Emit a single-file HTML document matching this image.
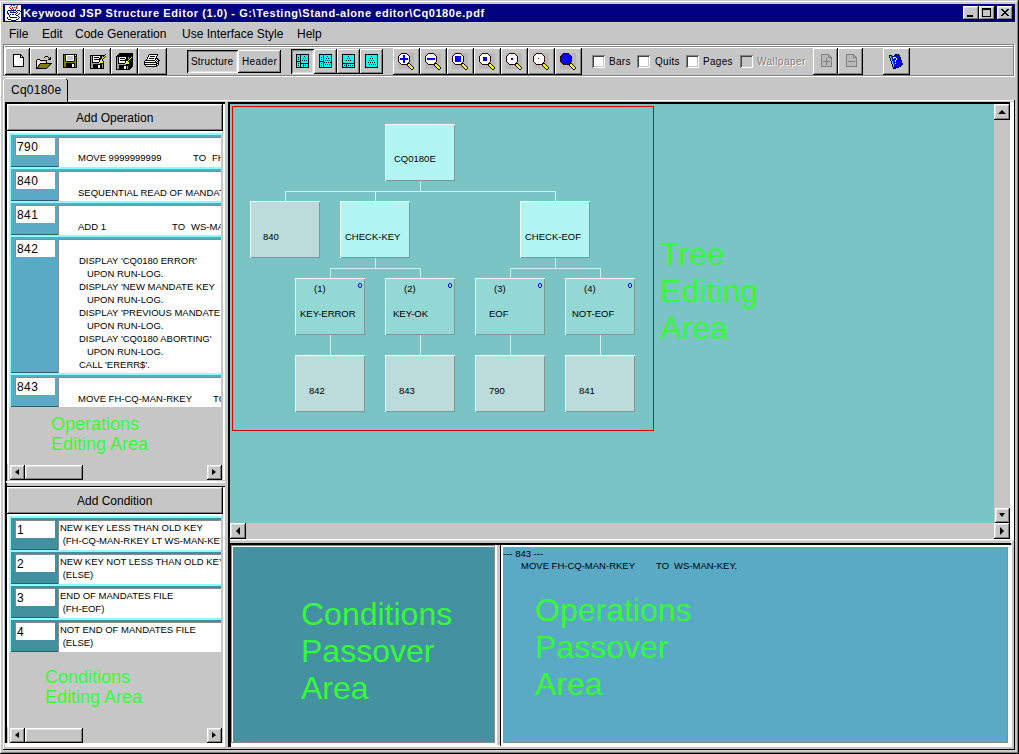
<!DOCTYPE html>
<html><head><meta charset="utf-8"><style>
html,body{margin:0;padding:0;}
body{width:1019px;height:754px;position:relative;overflow:hidden;background:#c6c6c6;font-family:"Liberation Sans",sans-serif;color:#000;}
.a{position:absolute;box-sizing:border-box;}
.t{position:absolute;white-space:pre;line-height:1;}
.raised{background:#c6c6c6;box-shadow:inset -1px -1px #000,inset 1px 1px #fff,inset -2px -2px #808080,inset 2px 2px #dfdfdf;}
.tb{background:#c6c6c6;box-shadow:inset -1px -1px #000,inset 1px 1px #fff,inset -2px -2px #808080;}
.pressed{background:#c6c6c6;box-shadow:inset 1px 1px #000,inset -1px -1px #fff,inset 2px 2px #808080,inset -2px -2px #dfdfdf;}
.sunken{box-shadow:inset 1px 1px #808080,inset -1px -1px #fff,inset 2px 2px #404040,inset -2px -2px #c6c6c6;}
.g{color:#36fa36;}
.m9{font-size:9.5px;}
.clip{overflow:hidden;}
.row{left:0;width:212px;background:#5aaac6;border-top:2px solid #8cffff;border-left:2px solid #8cffff;}
.crow{left:0;width:212px;background:#4190a0;border-top:2px solid #8cffff;border-left:2px solid #8cffff;}
.lbl{left:2px;width:47px;border-bottom:1px solid #2a5f6c;}
.nf{left:6px;width:40px;height:18px;background:#fff;border-top:1px solid #8a8a8a;border-left:1px solid #8a8a8a;}
.df{left:49px;width:170px;background:#fff;border-top:1px solid #8a8a8a;border-left:1px solid #8a8a8a;}
.num{font-size:12px;left:8px;letter-spacing:0.4px;}
</style></head><body>
<div class="a" style="left:0px;top:1px;width:1019px;height:1px;background:#fff;"></div>
<div class="a" style="left:0px;top:1px;width:1px;height:752px;background:#fff;"></div>
<div class="a" style="left:1018px;top:0px;width:1px;height:754px;background:#000;"></div>
<div class="a" style="left:0px;top:753px;width:1019px;height:1px;background:#000;"></div>
<div class="a" style="left:1017px;top:1px;width:1px;height:752px;background:#808080;"></div>
<div class="a" style="left:1px;top:752px;width:1017px;height:1px;background:#808080;"></div>
<div class="a" style="left:2px;top:3px;width:1014px;height:1px;background:#d4d0c8;"></div>
<div class="a" style="left:2px;top:3px;width:1px;height:20px;background:#d4d0c8;"></div>
<div class="a" style="left:2px;top:22px;width:1014px;height:1px;background:#d4d0c8;"></div>
<div class="a" style="left:1015px;top:3px;width:1px;height:20px;background:#d4d0c8;"></div>
<div class="a" style="left:3px;top:750px;width:1014px;height:1px;background:#d4d0c8;"></div>
<div class="a" style="left:3px;top:4px;width:1012px;height:18px;background:#000080;"></div>
<svg class="a" style="left:5px;top:5px;" width="16" height="16" shape-rendering="crispEdges"><rect x="0" y="0" width="6" height="1" fill="#fff"/><rect x="6" y="0" width="1" height="1" fill="#f00"/><rect x="7" y="0" width="1" height="1" fill="#fff"/><rect x="8" y="0" width="2" height="1" fill="#f00"/><rect x="10" y="0" width="2" height="1" fill="#fff"/><rect x="12" y="0" width="1" height="1" fill="#f00"/><rect x="13" y="0" width="3" height="1" fill="#fff"/><rect x="0" y="1" width="5" height="1" fill="#fff"/><rect x="5" y="1" width="1" height="1" fill="#f00"/><rect x="6" y="1" width="5" height="1" fill="#fff"/><rect x="11" y="1" width="1" height="1" fill="#f00"/><rect x="12" y="1" width="4" height="1" fill="#fff"/><rect x="0" y="2" width="4" height="1" fill="#fff"/><rect x="4" y="2" width="1" height="1" fill="#f00"/><rect x="5" y="2" width="2" height="1" fill="#fff"/><rect x="7" y="2" width="1" height="1" fill="#f00"/><rect x="8" y="2" width="1" height="1" fill="#fff"/><rect x="9" y="2" width="1" height="1" fill="#f00"/><rect x="10" y="2" width="1" height="1" fill="#fff"/><rect x="11" y="2" width="1" height="1" fill="#f00"/><rect x="12" y="2" width="4" height="1" fill="#fff"/><rect x="0" y="3" width="5" height="1" fill="#fff"/><rect x="5" y="3" width="1" height="1" fill="#f00"/><rect x="6" y="3" width="1" height="1" fill="#fff"/><rect x="7" y="3" width="1" height="1" fill="#f00"/><rect x="8" y="3" width="3" height="1" fill="#fff"/><rect x="11" y="3" width="1" height="1" fill="#f00"/><rect x="12" y="3" width="4" height="1" fill="#fff"/><rect x="0" y="4" width="6" height="1" fill="#fff"/><rect x="6" y="4" width="1" height="1" fill="#f00"/><rect x="7" y="4" width="1" height="1" fill="#fff"/><rect x="8" y="4" width="1" height="1" fill="#f00"/><rect x="9" y="4" width="1" height="1" fill="#fff"/><rect x="10" y="4" width="1" height="1" fill="#f00"/><rect x="11" y="4" width="5" height="1" fill="#fff"/><rect x="0" y="5" width="3" height="1" fill="#fff"/><rect x="3" y="5" width="8" height="1" fill="#000080"/><rect x="11" y="5" width="1" height="1" fill="#fff"/><rect x="12" y="5" width="3" height="1" fill="#000080"/><rect x="15" y="5" width="1" height="1" fill="#fff"/><rect x="0" y="6" width="2" height="1" fill="#fff"/><rect x="2" y="6" width="1" height="1" fill="#000080"/><rect x="3" y="6" width="2" height="1" fill="#fff"/><rect x="5" y="6" width="1" height="1" fill="#f00"/><rect x="6" y="6" width="2" height="1" fill="#fff"/><rect x="8" y="6" width="1" height="1" fill="#f00"/><rect x="9" y="6" width="2" height="1" fill="#fff"/><rect x="11" y="6" width="1" height="1" fill="#000080"/><rect x="12" y="6" width="3" height="1" fill="#fff"/><rect x="15" y="6" width="1" height="1" fill="#000080"/><rect x="0" y="7" width="2" height="1" fill="#fff"/><rect x="2" y="7" width="1" height="1" fill="#000080"/><rect x="3" y="7" width="2" height="1" fill="#fff"/><rect x="5" y="7" width="6" height="1" fill="#000080"/><rect x="11" y="7" width="1" height="1" fill="#fff"/><rect x="12" y="7" width="1" height="1" fill="#000080"/><rect x="13" y="7" width="3" height="1" fill="#fff"/><rect x="0" y="8" width="2" height="1" fill="#fff"/><rect x="2" y="8" width="2" height="1" fill="#000080"/><rect x="4" y="8" width="7" height="1" fill="#fff"/><rect x="11" y="8" width="1" height="1" fill="#000080"/><rect x="12" y="8" width="2" height="1" fill="#fff"/><rect x="14" y="8" width="1" height="1" fill="#000080"/><rect x="15" y="8" width="1" height="1" fill="#fff"/><rect x="0" y="9" width="3" height="1" fill="#fff"/><rect x="3" y="9" width="1" height="1" fill="#000080"/><rect x="4" y="9" width="1" height="1" fill="#fff"/><rect x="5" y="9" width="1" height="1" fill="#000080"/><rect x="6" y="9" width="1" height="1" fill="#fff"/><rect x="7" y="9" width="2" height="1" fill="#000080"/><rect x="9" y="9" width="1" height="1" fill="#fff"/><rect x="10" y="9" width="1" height="1" fill="#000080"/><rect x="11" y="9" width="2" height="1" fill="#fff"/><rect x="13" y="9" width="1" height="1" fill="#000080"/><rect x="14" y="9" width="2" height="1" fill="#fff"/><rect x="0" y="10" width="4" height="1" fill="#fff"/><rect x="4" y="10" width="1" height="1" fill="#000080"/><rect x="5" y="10" width="6" height="1" fill="#fff"/><rect x="11" y="10" width="2" height="1" fill="#000080"/><rect x="13" y="10" width="3" height="1" fill="#fff"/><rect x="0" y="11" width="4" height="1" fill="#fff"/><rect x="4" y="11" width="1" height="1" fill="#000080"/><rect x="5" y="11" width="8" height="1" fill="#fff"/><rect x="13" y="11" width="1" height="1" fill="#000080"/><rect x="14" y="11" width="2" height="1" fill="#fff"/><rect x="0" y="12" width="2" height="1" fill="#fff"/><rect x="2" y="12" width="1" height="1" fill="#000080"/><rect x="3" y="12" width="2" height="1" fill="#fff"/><rect x="5" y="12" width="7" height="1" fill="#000080"/><rect x="12" y="12" width="2" height="1" fill="#fff"/><rect x="14" y="12" width="1" height="1" fill="#000080"/><rect x="15" y="12" width="1" height="1" fill="#fff"/><rect x="0" y="13" width="2" height="1" fill="#fff"/><rect x="2" y="13" width="1" height="1" fill="#000080"/><rect x="3" y="13" width="10" height="1" fill="#fff"/><rect x="13" y="13" width="1" height="1" fill="#000080"/><rect x="14" y="13" width="2" height="1" fill="#fff"/><rect x="0" y="14" width="3" height="1" fill="#fff"/><rect x="3" y="14" width="3" height="1" fill="#000080"/><rect x="6" y="14" width="5" height="1" fill="#fff"/><rect x="11" y="14" width="2" height="1" fill="#000080"/><rect x="13" y="14" width="3" height="1" fill="#fff"/><rect x="0" y="15" width="6" height="1" fill="#fff"/><rect x="6" y="15" width="5" height="1" fill="#000080"/><rect x="11" y="15" width="5" height="1" fill="#fff"/></svg>
<div class="t" style="left:23px;top:8px;font-size:11px;font-weight:bold;color:#fff;letter-spacing:0.58px;">Keywood JSP Structure Editor (1.0) - G:\Testing\Stand-alone editor\Cq0180e.pdf</div>
<div class="a raised" style="left:963px;top:6px;width:16px;height:14px;"></div>
<div class="a raised" style="left:979px;top:6px;width:16px;height:14px;"></div>
<div class="a raised" style="left:997px;top:6px;width:16px;height:14px;"></div>
<div class="a" style="left:967px;top:15px;width:6px;height:2px;background:#000;"></div>
<svg class="a" style="left:982px;top:8px;" width="9" height="9" shape-rendering="crispEdges"><rect x="0" y="0" width="9" height="1" fill="#000"/><rect x="0" y="1" width="9" height="1" fill="#000"/><rect x="0" y="2" width="1" height="1" fill="#000"/><rect x="8" y="2" width="1" height="1" fill="#000"/><rect x="0" y="3" width="1" height="1" fill="#000"/><rect x="8" y="3" width="1" height="1" fill="#000"/><rect x="0" y="4" width="1" height="1" fill="#000"/><rect x="8" y="4" width="1" height="1" fill="#000"/><rect x="0" y="5" width="1" height="1" fill="#000"/><rect x="8" y="5" width="1" height="1" fill="#000"/><rect x="0" y="6" width="1" height="1" fill="#000"/><rect x="8" y="6" width="1" height="1" fill="#000"/><rect x="0" y="7" width="1" height="1" fill="#000"/><rect x="8" y="7" width="1" height="1" fill="#000"/><rect x="0" y="8" width="9" height="1" fill="#000"/></svg>
<svg class="a" style="left:1001px;top:9px;" width="8" height="7" shape-rendering="crispEdges"><rect x="0" y="0" width="2" height="1" fill="#000"/><rect x="6" y="0" width="2" height="1" fill="#000"/><rect x="1" y="1" width="2" height="1" fill="#000"/><rect x="5" y="1" width="2" height="1" fill="#000"/><rect x="2" y="2" width="4" height="1" fill="#000"/><rect x="3" y="3" width="2" height="1" fill="#000"/><rect x="2" y="4" width="4" height="1" fill="#000"/><rect x="1" y="5" width="2" height="1" fill="#000"/><rect x="5" y="5" width="2" height="1" fill="#000"/><rect x="0" y="6" width="2" height="1" fill="#000"/><rect x="6" y="6" width="2" height="1" fill="#000"/></svg>
<div class="t" style="left:9px;top:28px;font-size:12px;">File</div>
<div class="t" style="left:42px;top:28px;font-size:12px;">Edit</div>
<div class="t" style="left:75px;top:28px;font-size:12px;">Code Generation</div>
<div class="t" style="left:182px;top:28px;font-size:12px;">Use Interface Style</div>
<div class="t" style="left:297px;top:28px;font-size:12px;">Help</div>
<div class="a" style="left:3px;top:44px;width:1011px;height:1px;background:#808080;"></div>
<div class="a" style="left:3px;top:45px;width:1010px;height:1px;background:#fff;"></div>
<div class="a" style="left:3px;top:46px;width:1011px;height:1px;background:#808080;"></div>
<div class="a" style="left:4px;top:47px;width:1009px;height:1px;background:#fff;"></div>
<div class="a" style="left:3px;top:44px;width:1px;height:32px;background:#808080;"></div>
<div class="a" style="left:4px;top:45px;width:1px;height:32px;background:#fff;"></div>
<div class="a" style="left:1013px;top:44px;width:1px;height:32px;background:#808080;"></div>
<div class="a" style="left:1014px;top:44px;width:1px;height:33px;background:#fff;"></div>
<div class="a" style="left:3px;top:75px;width:1011px;height:1px;background:#808080;"></div>
<div class="a" style="left:3px;top:76px;width:1012px;height:1px;background:#fff;"></div>
<div class="a tb" style="left:5px;top:48px;width:25px;height:27px;"></div>
<div class="a tb" style="left:30px;top:48px;width:27px;height:27px;"></div>
<div class="a tb" style="left:57px;top:48px;width:27px;height:27px;"></div>
<div class="a tb" style="left:84px;top:48px;width:27px;height:27px;"></div>
<div class="a tb" style="left:111px;top:48px;width:27px;height:27px;"></div>
<div class="a tb" style="left:138px;top:48px;width:29px;height:27px;"></div>
<svg class="a" style="left:13px;top:54px;" width="11" height="13" shape-rendering="crispEdges"><rect x="0" y="0" width="8" height="1" fill="#000"/><rect x="0" y="1" width="1" height="1" fill="#000"/><rect x="1" y="1" width="6" height="1" fill="#fff"/><rect x="7" y="1" width="2" height="1" fill="#000"/><rect x="0" y="2" width="1" height="1" fill="#000"/><rect x="1" y="2" width="6" height="1" fill="#fff"/><rect x="7" y="2" width="1" height="1" fill="#000"/><rect x="8" y="2" width="1" height="1" fill="#fff"/><rect x="9" y="2" width="1" height="1" fill="#000"/><rect x="0" y="3" width="1" height="1" fill="#000"/><rect x="1" y="3" width="6" height="1" fill="#fff"/><rect x="7" y="3" width="4" height="1" fill="#000"/><rect x="0" y="4" width="1" height="1" fill="#000"/><rect x="1" y="4" width="9" height="1" fill="#fff"/><rect x="10" y="4" width="1" height="1" fill="#000"/><rect x="0" y="5" width="1" height="1" fill="#000"/><rect x="1" y="5" width="9" height="1" fill="#fff"/><rect x="10" y="5" width="1" height="1" fill="#000"/><rect x="0" y="6" width="1" height="1" fill="#000"/><rect x="1" y="6" width="9" height="1" fill="#fff"/><rect x="10" y="6" width="1" height="1" fill="#000"/><rect x="0" y="7" width="1" height="1" fill="#000"/><rect x="1" y="7" width="9" height="1" fill="#fff"/><rect x="10" y="7" width="1" height="1" fill="#000"/><rect x="0" y="8" width="1" height="1" fill="#000"/><rect x="1" y="8" width="9" height="1" fill="#fff"/><rect x="10" y="8" width="1" height="1" fill="#000"/><rect x="0" y="9" width="1" height="1" fill="#000"/><rect x="1" y="9" width="9" height="1" fill="#fff"/><rect x="10" y="9" width="1" height="1" fill="#000"/><rect x="0" y="10" width="1" height="1" fill="#000"/><rect x="1" y="10" width="9" height="1" fill="#fff"/><rect x="10" y="10" width="1" height="1" fill="#000"/><rect x="0" y="11" width="1" height="1" fill="#000"/><rect x="1" y="11" width="9" height="1" fill="#fff"/><rect x="10" y="11" width="1" height="1" fill="#000"/><rect x="0" y="12" width="11" height="1" fill="#000"/></svg>
<svg class="a" style="left:36px;top:56px;" width="16" height="13" shape-rendering="crispEdges"><rect x="9" y="0" width="3" height="1" fill="#000"/><rect x="8" y="1" width="1" height="1" fill="#000"/><rect x="12" y="1" width="1" height="1" fill="#000"/><rect x="14" y="1" width="1" height="1" fill="#000"/><rect x="13" y="2" width="2" height="1" fill="#000"/><rect x="1" y="3" width="3" height="1" fill="#000"/><rect x="12" y="3" width="3" height="1" fill="#000"/><rect x="0" y="4" width="1" height="1" fill="#000"/><rect x="1" y="4" width="1" height="1" fill="#ff0"/><rect x="2" y="4" width="1" height="1" fill="#fff"/><rect x="3" y="4" width="1" height="1" fill="#ff0"/><rect x="4" y="4" width="7" height="1" fill="#000"/><rect x="0" y="5" width="1" height="1" fill="#000"/><rect x="1" y="5" width="1" height="1" fill="#fff"/><rect x="2" y="5" width="1" height="1" fill="#ff0"/><rect x="3" y="5" width="1" height="1" fill="#fff"/><rect x="4" y="5" width="1" height="1" fill="#ff0"/><rect x="5" y="5" width="1" height="1" fill="#fff"/><rect x="6" y="5" width="1" height="1" fill="#ff0"/><rect x="7" y="5" width="1" height="1" fill="#fff"/><rect x="8" y="5" width="1" height="1" fill="#ff0"/><rect x="9" y="5" width="1" height="1" fill="#fff"/><rect x="10" y="5" width="1" height="1" fill="#000"/><rect x="0" y="6" width="1" height="1" fill="#000"/><rect x="1" y="6" width="1" height="1" fill="#ff0"/><rect x="2" y="6" width="1" height="1" fill="#fff"/><rect x="3" y="6" width="1" height="1" fill="#ff0"/><rect x="4" y="6" width="1" height="1" fill="#fff"/><rect x="5" y="6" width="1" height="1" fill="#ff0"/><rect x="6" y="6" width="1" height="1" fill="#fff"/><rect x="7" y="6" width="1" height="1" fill="#ff0"/><rect x="8" y="6" width="1" height="1" fill="#fff"/><rect x="9" y="6" width="1" height="1" fill="#ff0"/><rect x="10" y="6" width="1" height="1" fill="#000"/><rect x="0" y="7" width="1" height="1" fill="#000"/><rect x="1" y="7" width="1" height="1" fill="#fff"/><rect x="2" y="7" width="1" height="1" fill="#ff0"/><rect x="3" y="7" width="1" height="1" fill="#fff"/><rect x="4" y="7" width="12" height="1" fill="#000"/><rect x="0" y="8" width="1" height="1" fill="#000"/><rect x="1" y="8" width="1" height="1" fill="#ff0"/><rect x="2" y="8" width="1" height="1" fill="#fff"/><rect x="3" y="8" width="1" height="1" fill="#000"/><rect x="4" y="8" width="10" height="1" fill="#808000"/><rect x="14" y="8" width="1" height="1" fill="#000"/><rect x="0" y="9" width="1" height="1" fill="#000"/><rect x="1" y="9" width="1" height="1" fill="#fff"/><rect x="2" y="9" width="1" height="1" fill="#000"/><rect x="3" y="9" width="10" height="1" fill="#808000"/><rect x="13" y="9" width="1" height="1" fill="#000"/><rect x="0" y="10" width="1" height="1" fill="#000"/><rect x="1" y="10" width="1" height="1" fill="#ff0"/><rect x="2" y="10" width="1" height="1" fill="#000"/><rect x="3" y="10" width="9" height="1" fill="#808000"/><rect x="12" y="10" width="1" height="1" fill="#000"/><rect x="0" y="11" width="2" height="1" fill="#000"/><rect x="2" y="11" width="9" height="1" fill="#808000"/><rect x="11" y="11" width="1" height="1" fill="#000"/><rect x="0" y="12" width="11" height="1" fill="#000"/></svg>
<svg class="a" style="left:63px;top:54px;" width="14" height="14" shape-rendering="crispEdges"><rect x="0" y="0" width="14" height="1" fill="#000"/><rect x="0" y="1" width="1" height="1" fill="#000"/><rect x="1" y="1" width="1" height="1" fill="#808000"/><rect x="2" y="1" width="1" height="1" fill="#000"/><rect x="3" y="1" width="8" height="1" fill="#fff"/><rect x="11" y="1" width="1" height="1" fill="#000"/><rect x="12" y="1" width="1" height="1" fill="#fff"/><rect x="13" y="1" width="1" height="1" fill="#000"/><rect x="0" y="2" width="1" height="1" fill="#000"/><rect x="1" y="2" width="1" height="1" fill="#808000"/><rect x="2" y="2" width="1" height="1" fill="#000"/><rect x="3" y="2" width="1" height="1" fill="#fff"/><rect x="4" y="2" width="6" height="1" fill="#c6c6c6"/><rect x="10" y="2" width="1" height="1" fill="#fff"/><rect x="11" y="2" width="3" height="1" fill="#000"/><rect x="0" y="3" width="1" height="1" fill="#000"/><rect x="1" y="3" width="1" height="1" fill="#808000"/><rect x="2" y="3" width="1" height="1" fill="#000"/><rect x="3" y="3" width="1" height="1" fill="#fff"/><rect x="4" y="3" width="6" height="1" fill="#c6c6c6"/><rect x="10" y="3" width="1" height="1" fill="#fff"/><rect x="11" y="3" width="1" height="1" fill="#000"/><rect x="12" y="3" width="1" height="1" fill="#808000"/><rect x="13" y="3" width="1" height="1" fill="#000"/><rect x="0" y="4" width="1" height="1" fill="#000"/><rect x="1" y="4" width="1" height="1" fill="#808000"/><rect x="2" y="4" width="1" height="1" fill="#000"/><rect x="3" y="4" width="1" height="1" fill="#fff"/><rect x="4" y="4" width="6" height="1" fill="#c6c6c6"/><rect x="10" y="4" width="1" height="1" fill="#fff"/><rect x="11" y="4" width="1" height="1" fill="#000"/><rect x="12" y="4" width="1" height="1" fill="#808000"/><rect x="13" y="4" width="1" height="1" fill="#000"/><rect x="0" y="5" width="1" height="1" fill="#000"/><rect x="1" y="5" width="1" height="1" fill="#808000"/><rect x="2" y="5" width="1" height="1" fill="#000"/><rect x="3" y="5" width="1" height="1" fill="#fff"/><rect x="4" y="5" width="6" height="1" fill="#c6c6c6"/><rect x="10" y="5" width="1" height="1" fill="#fff"/><rect x="11" y="5" width="1" height="1" fill="#000"/><rect x="12" y="5" width="1" height="1" fill="#808000"/><rect x="13" y="5" width="1" height="1" fill="#000"/><rect x="0" y="6" width="1" height="1" fill="#000"/><rect x="1" y="6" width="1" height="1" fill="#808000"/><rect x="2" y="6" width="1" height="1" fill="#000"/><rect x="3" y="6" width="8" height="1" fill="#fff"/><rect x="11" y="6" width="1" height="1" fill="#000"/><rect x="12" y="6" width="1" height="1" fill="#808000"/><rect x="13" y="6" width="1" height="1" fill="#000"/><rect x="0" y="7" width="1" height="1" fill="#000"/><rect x="1" y="7" width="2" height="1" fill="#808000"/><rect x="3" y="7" width="8" height="1" fill="#000"/><rect x="11" y="7" width="2" height="1" fill="#808000"/><rect x="13" y="7" width="1" height="1" fill="#000"/><rect x="0" y="8" width="1" height="1" fill="#000"/><rect x="1" y="8" width="12" height="1" fill="#808000"/><rect x="13" y="8" width="1" height="1" fill="#000"/><rect x="0" y="9" width="1" height="1" fill="#000"/><rect x="1" y="9" width="2" height="1" fill="#808000"/><rect x="3" y="9" width="9" height="1" fill="#000"/><rect x="12" y="9" width="1" height="1" fill="#808000"/><rect x="13" y="9" width="1" height="1" fill="#000"/><rect x="0" y="10" width="1" height="1" fill="#000"/><rect x="1" y="10" width="2" height="1" fill="#808000"/><rect x="3" y="10" width="6" height="1" fill="#000"/><rect x="9" y="10" width="2" height="1" fill="#fff"/><rect x="11" y="10" width="1" height="1" fill="#000"/><rect x="12" y="10" width="1" height="1" fill="#808000"/><rect x="13" y="10" width="1" height="1" fill="#000"/><rect x="0" y="11" width="1" height="1" fill="#000"/><rect x="1" y="11" width="2" height="1" fill="#808000"/><rect x="3" y="11" width="6" height="1" fill="#000"/><rect x="9" y="11" width="2" height="1" fill="#fff"/><rect x="11" y="11" width="1" height="1" fill="#000"/><rect x="12" y="11" width="1" height="1" fill="#808000"/><rect x="13" y="11" width="1" height="1" fill="#000"/><rect x="0" y="12" width="1" height="1" fill="#000"/><rect x="1" y="12" width="2" height="1" fill="#808000"/><rect x="3" y="12" width="6" height="1" fill="#000"/><rect x="9" y="12" width="2" height="1" fill="#fff"/><rect x="11" y="12" width="1" height="1" fill="#000"/><rect x="12" y="12" width="1" height="1" fill="#808000"/><rect x="13" y="12" width="1" height="1" fill="#000"/><rect x="0" y="13" width="14" height="1" fill="#000"/></svg>
<svg class="a" style="left:90px;top:54px;" width="16" height="15" shape-rendering="crispEdges"><rect x="15" y="0" width="1" height="1" fill="#000"/><rect x="0" y="1" width="15" height="1" fill="#000"/><rect x="15" y="1" width="1" height="1" fill="#ff0"/><rect x="0" y="2" width="1" height="1" fill="#000"/><rect x="1" y="2" width="1" height="1" fill="#a0a0a0"/><rect x="2" y="2" width="1" height="1" fill="#000"/><rect x="3" y="2" width="7" height="1" fill="#fff"/><rect x="10" y="2" width="2" height="1" fill="#000"/><rect x="12" y="2" width="1" height="1" fill="#a0a0a0"/><rect x="13" y="2" width="1" height="1" fill="#000"/><rect x="14" y="2" width="1" height="1" fill="#ff0"/><rect x="15" y="2" width="1" height="1" fill="#000"/><rect x="0" y="3" width="1" height="1" fill="#000"/><rect x="1" y="3" width="1" height="1" fill="#a0a0a0"/><rect x="2" y="3" width="1" height="1" fill="#000"/><rect x="3" y="3" width="1" height="1" fill="#fff"/><rect x="4" y="3" width="5" height="1" fill="#000"/><rect x="9" y="3" width="1" height="1" fill="#fff"/><rect x="10" y="3" width="2" height="1" fill="#000"/><rect x="12" y="3" width="1" height="1" fill="#a0a0a0"/><rect x="13" y="3" width="1" height="1" fill="#ff0"/><rect x="14" y="3" width="1" height="1" fill="#000"/><rect x="0" y="4" width="1" height="1" fill="#000"/><rect x="1" y="4" width="1" height="1" fill="#a0a0a0"/><rect x="2" y="4" width="1" height="1" fill="#000"/><rect x="3" y="4" width="6" height="1" fill="#fff"/><rect x="9" y="4" width="3" height="1" fill="#000"/><rect x="12" y="4" width="1" height="1" fill="#ff0"/><rect x="13" y="4" width="1" height="1" fill="#000"/><rect x="0" y="5" width="1" height="1" fill="#000"/><rect x="1" y="5" width="1" height="1" fill="#a0a0a0"/><rect x="2" y="5" width="1" height="1" fill="#000"/><rect x="3" y="5" width="1" height="1" fill="#fff"/><rect x="4" y="5" width="7" height="1" fill="#000"/><rect x="11" y="5" width="1" height="1" fill="#ff0"/><rect x="12" y="5" width="1" height="1" fill="#000"/><rect x="0" y="6" width="1" height="1" fill="#000"/><rect x="1" y="6" width="1" height="1" fill="#a0a0a0"/><rect x="2" y="6" width="1" height="1" fill="#000"/><rect x="3" y="6" width="6" height="1" fill="#fff"/><rect x="9" y="6" width="1" height="1" fill="#000"/><rect x="10" y="6" width="1" height="1" fill="#fff"/><rect x="11" y="6" width="1" height="1" fill="#ff0"/><rect x="12" y="6" width="1" height="1" fill="#000"/><rect x="0" y="7" width="1" height="1" fill="#000"/><rect x="1" y="7" width="1" height="1" fill="#a0a0a0"/><rect x="2" y="7" width="1" height="1" fill="#000"/><rect x="3" y="7" width="6" height="1" fill="#fff"/><rect x="9" y="7" width="1" height="1" fill="#000"/><rect x="10" y="7" width="3" height="1" fill="#ff0"/><rect x="13" y="7" width="1" height="1" fill="#000"/><rect x="0" y="8" width="1" height="1" fill="#000"/><rect x="1" y="8" width="1" height="1" fill="#a0a0a0"/><rect x="2" y="8" width="7" height="1" fill="#000"/><rect x="9" y="8" width="4" height="1" fill="#ff0"/><rect x="13" y="8" width="1" height="1" fill="#000"/><rect x="0" y="9" width="1" height="1" fill="#000"/><rect x="1" y="9" width="9" height="1" fill="#a0a0a0"/><rect x="10" y="9" width="4" height="1" fill="#000"/><rect x="0" y="10" width="1" height="1" fill="#000"/><rect x="1" y="10" width="2" height="1" fill="#a0a0a0"/><rect x="3" y="10" width="9" height="1" fill="#000"/><rect x="12" y="10" width="1" height="1" fill="#a0a0a0"/><rect x="13" y="10" width="1" height="1" fill="#000"/><rect x="0" y="11" width="1" height="1" fill="#000"/><rect x="1" y="11" width="2" height="1" fill="#a0a0a0"/><rect x="3" y="11" width="5" height="1" fill="#000"/><rect x="8" y="11" width="2" height="1" fill="#fff"/><rect x="10" y="11" width="2" height="1" fill="#000"/><rect x="12" y="11" width="1" height="1" fill="#a0a0a0"/><rect x="13" y="11" width="1" height="1" fill="#000"/><rect x="0" y="12" width="1" height="1" fill="#000"/><rect x="1" y="12" width="2" height="1" fill="#a0a0a0"/><rect x="3" y="12" width="5" height="1" fill="#000"/><rect x="8" y="12" width="2" height="1" fill="#fff"/><rect x="10" y="12" width="2" height="1" fill="#000"/><rect x="12" y="12" width="1" height="1" fill="#a0a0a0"/><rect x="13" y="12" width="1" height="1" fill="#000"/><rect x="0" y="13" width="1" height="1" fill="#000"/><rect x="1" y="13" width="2" height="1" fill="#a0a0a0"/><rect x="3" y="13" width="5" height="1" fill="#000"/><rect x="8" y="13" width="2" height="1" fill="#fff"/><rect x="10" y="13" width="2" height="1" fill="#000"/><rect x="12" y="13" width="1" height="1" fill="#a0a0a0"/><rect x="13" y="13" width="1" height="1" fill="#000"/><rect x="0" y="14" width="14" height="1" fill="#000"/></svg>
<svg class="a" style="left:116px;top:53px;" width="17" height="17" shape-rendering="crispEdges"><rect x="3" y="0" width="14" height="1" fill="#000"/><rect x="2" y="1" width="15" height="1" fill="#000"/><rect x="1" y="2" width="16" height="1" fill="#000"/><rect x="0" y="3" width="17" height="1" fill="#000"/><rect x="0" y="4" width="1" height="1" fill="#000"/><rect x="1" y="4" width="1" height="1" fill="#a0a0a0"/><rect x="2" y="4" width="1" height="1" fill="#000"/><rect x="3" y="4" width="7" height="1" fill="#fff"/><rect x="10" y="4" width="2" height="1" fill="#000"/><rect x="12" y="4" width="1" height="1" fill="#a0a0a0"/><rect x="13" y="4" width="2" height="1" fill="#000"/><rect x="15" y="4" width="1" height="1" fill="#ff0"/><rect x="16" y="4" width="1" height="1" fill="#000"/><rect x="0" y="5" width="1" height="1" fill="#000"/><rect x="1" y="5" width="1" height="1" fill="#a0a0a0"/><rect x="2" y="5" width="1" height="1" fill="#000"/><rect x="3" y="5" width="1" height="1" fill="#fff"/><rect x="4" y="5" width="5" height="1" fill="#000"/><rect x="9" y="5" width="1" height="1" fill="#fff"/><rect x="10" y="5" width="2" height="1" fill="#000"/><rect x="12" y="5" width="1" height="1" fill="#a0a0a0"/><rect x="13" y="5" width="1" height="1" fill="#000"/><rect x="14" y="5" width="1" height="1" fill="#ff0"/><rect x="15" y="5" width="2" height="1" fill="#000"/><rect x="0" y="6" width="1" height="1" fill="#000"/><rect x="1" y="6" width="1" height="1" fill="#a0a0a0"/><rect x="2" y="6" width="1" height="1" fill="#000"/><rect x="3" y="6" width="6" height="1" fill="#fff"/><rect x="9" y="6" width="4" height="1" fill="#000"/><rect x="13" y="6" width="1" height="1" fill="#ff0"/><rect x="14" y="6" width="3" height="1" fill="#000"/><rect x="0" y="7" width="1" height="1" fill="#000"/><rect x="1" y="7" width="1" height="1" fill="#a0a0a0"/><rect x="2" y="7" width="1" height="1" fill="#000"/><rect x="3" y="7" width="1" height="1" fill="#fff"/><rect x="4" y="7" width="8" height="1" fill="#000"/><rect x="12" y="7" width="1" height="1" fill="#ff0"/><rect x="13" y="7" width="4" height="1" fill="#000"/><rect x="0" y="8" width="1" height="1" fill="#000"/><rect x="1" y="8" width="1" height="1" fill="#a0a0a0"/><rect x="2" y="8" width="1" height="1" fill="#000"/><rect x="3" y="8" width="6" height="1" fill="#fff"/><rect x="9" y="8" width="1" height="1" fill="#000"/><rect x="10" y="8" width="1" height="1" fill="#fff"/><rect x="11" y="8" width="1" height="1" fill="#ff0"/><rect x="12" y="8" width="5" height="1" fill="#000"/><rect x="0" y="9" width="1" height="1" fill="#000"/><rect x="1" y="9" width="1" height="1" fill="#a0a0a0"/><rect x="2" y="9" width="1" height="1" fill="#000"/><rect x="3" y="9" width="6" height="1" fill="#fff"/><rect x="9" y="9" width="1" height="1" fill="#000"/><rect x="10" y="9" width="3" height="1" fill="#ff0"/><rect x="13" y="9" width="4" height="1" fill="#000"/><rect x="0" y="10" width="1" height="1" fill="#000"/><rect x="1" y="10" width="1" height="1" fill="#a0a0a0"/><rect x="2" y="10" width="7" height="1" fill="#000"/><rect x="9" y="10" width="4" height="1" fill="#ff0"/><rect x="13" y="10" width="4" height="1" fill="#000"/><rect x="0" y="11" width="1" height="1" fill="#000"/><rect x="1" y="11" width="9" height="1" fill="#a0a0a0"/><rect x="10" y="11" width="7" height="1" fill="#000"/><rect x="0" y="12" width="1" height="1" fill="#000"/><rect x="1" y="12" width="2" height="1" fill="#a0a0a0"/><rect x="3" y="12" width="14" height="1" fill="#000"/><rect x="0" y="13" width="1" height="1" fill="#000"/><rect x="1" y="13" width="2" height="1" fill="#a0a0a0"/><rect x="3" y="13" width="5" height="1" fill="#000"/><rect x="8" y="13" width="2" height="1" fill="#fff"/><rect x="10" y="13" width="1" height="1" fill="#000"/><rect x="11" y="13" width="1" height="1" fill="#a0a0a0"/><rect x="12" y="13" width="5" height="1" fill="#000"/><rect x="0" y="14" width="1" height="1" fill="#000"/><rect x="1" y="14" width="2" height="1" fill="#a0a0a0"/><rect x="3" y="14" width="5" height="1" fill="#000"/><rect x="8" y="14" width="2" height="1" fill="#fff"/><rect x="10" y="14" width="1" height="1" fill="#000"/><rect x="11" y="14" width="1" height="1" fill="#a0a0a0"/><rect x="12" y="14" width="4" height="1" fill="#000"/><rect x="0" y="15" width="1" height="1" fill="#000"/><rect x="1" y="15" width="2" height="1" fill="#a0a0a0"/><rect x="3" y="15" width="5" height="1" fill="#000"/><rect x="8" y="15" width="2" height="1" fill="#fff"/><rect x="10" y="15" width="1" height="1" fill="#000"/><rect x="11" y="15" width="1" height="1" fill="#a0a0a0"/><rect x="12" y="15" width="3" height="1" fill="#000"/><rect x="0" y="16" width="14" height="1" fill="#000"/></svg>
<svg class="a" style="left:144px;top:54px;" width="16" height="13" shape-rendering="crispEdges"><rect x="5" y="0" width="9" height="1" fill="#000"/><rect x="4" y="1" width="1" height="1" fill="#000"/><rect x="5" y="1" width="8" height="1" fill="#fff"/><rect x="13" y="1" width="1" height="1" fill="#000"/><rect x="4" y="2" width="1" height="1" fill="#000"/><rect x="5" y="2" width="1" height="1" fill="#fff"/><rect x="6" y="2" width="5" height="1" fill="#000"/><rect x="11" y="2" width="1" height="1" fill="#fff"/><rect x="12" y="2" width="1" height="1" fill="#000"/><rect x="3" y="3" width="1" height="1" fill="#000"/><rect x="4" y="3" width="8" height="1" fill="#fff"/><rect x="12" y="3" width="1" height="1" fill="#000"/><rect x="3" y="4" width="1" height="1" fill="#000"/><rect x="4" y="4" width="1" height="1" fill="#fff"/><rect x="5" y="4" width="5" height="1" fill="#000"/><rect x="10" y="4" width="1" height="1" fill="#fff"/><rect x="11" y="4" width="3" height="1" fill="#000"/><rect x="2" y="5" width="1" height="1" fill="#000"/><rect x="3" y="5" width="8" height="1" fill="#fff"/><rect x="11" y="5" width="1" height="1" fill="#000"/><rect x="12" y="5" width="1" height="1" fill="#fff"/><rect x="13" y="5" width="2" height="1" fill="#000"/><rect x="1" y="6" width="10" height="1" fill="#000"/><rect x="11" y="6" width="1" height="1" fill="#fff"/><rect x="12" y="6" width="1" height="1" fill="#000"/><rect x="13" y="6" width="1" height="1" fill="#fff"/><rect x="14" y="6" width="2" height="1" fill="#000"/><rect x="0" y="7" width="1" height="1" fill="#000"/><rect x="1" y="7" width="10" height="1" fill="#fff"/><rect x="11" y="7" width="1" height="1" fill="#000"/><rect x="12" y="7" width="1" height="1" fill="#fff"/><rect x="13" y="7" width="2" height="1" fill="#000"/><rect x="0" y="8" width="13" height="1" fill="#000"/><rect x="13" y="8" width="1" height="1" fill="#fff"/><rect x="14" y="8" width="1" height="1" fill="#000"/><rect x="0" y="9" width="1" height="1" fill="#000"/><rect x="1" y="9" width="6" height="1" fill="#fff"/><rect x="7" y="9" width="3" height="1" fill="#ff0"/><rect x="10" y="9" width="2" height="1" fill="#fff"/><rect x="12" y="9" width="3" height="1" fill="#000"/><rect x="0" y="10" width="13" height="1" fill="#000"/><rect x="13" y="10" width="1" height="1" fill="#fff"/><rect x="14" y="10" width="1" height="1" fill="#000"/><rect x="1" y="11" width="1" height="1" fill="#000"/><rect x="2" y="11" width="10" height="1" fill="#fff"/><rect x="12" y="11" width="2" height="1" fill="#000"/><rect x="2" y="12" width="11" height="1" fill="#000"/></svg>
<div class="a pressed" style="left:187px;top:50px;width:51px;height:23px;"></div>
<div class="t" style="left:191px;top:57px;font-size:10px;letter-spacing:0.2px;">Structure</div>
<div class="a tb" style="left:238px;top:50px;width:43px;height:23px;"></div>
<div class="t" style="left:242px;top:57px;font-size:10px;letter-spacing:0.4px;">Header</div>
<div class="a pressed" style="left:291px;top:49px;width:23px;height:25px;"></div>
<div class="a tb" style="left:314px;top:49px;width:23px;height:25px;"></div>
<div class="a tb" style="left:337px;top:49px;width:23px;height:25px;"></div>
<div class="a tb" style="left:360px;top:49px;width:23px;height:25px;"></div>
<svg class="a" style="left:296px;top:54px;" width="13" height="14" shape-rendering="crispEdges"><rect x="0" y="0" width="13" height="1" fill="#000"/><rect x="0" y="1" width="1" height="1" fill="#000"/><rect x="1" y="1" width="3" height="1" fill="#0ff"/><rect x="4" y="1" width="1" height="1" fill="#000"/><rect x="5" y="1" width="7" height="1" fill="#0ff"/><rect x="12" y="1" width="1" height="1" fill="#000"/><rect x="0" y="2" width="1" height="1" fill="#000"/><rect x="1" y="2" width="3" height="1" fill="#0ff"/><rect x="4" y="2" width="1" height="1" fill="#000"/><rect x="5" y="2" width="3" height="1" fill="#0ff"/><rect x="8" y="2" width="1" height="1" fill="#000"/><rect x="9" y="2" width="3" height="1" fill="#0ff"/><rect x="12" y="2" width="1" height="1" fill="#000"/><rect x="0" y="3" width="1" height="1" fill="#000"/><rect x="1" y="3" width="1" height="1" fill="#0ff"/><rect x="2" y="3" width="1" height="1" fill="#000"/><rect x="3" y="3" width="1" height="1" fill="#0ff"/><rect x="4" y="3" width="1" height="1" fill="#000"/><rect x="5" y="3" width="7" height="1" fill="#0ff"/><rect x="12" y="3" width="1" height="1" fill="#000"/><rect x="0" y="4" width="1" height="1" fill="#000"/><rect x="1" y="4" width="3" height="1" fill="#0ff"/><rect x="4" y="4" width="1" height="1" fill="#000"/><rect x="5" y="4" width="2" height="1" fill="#0ff"/><rect x="7" y="4" width="1" height="1" fill="#000"/><rect x="8" y="4" width="1" height="1" fill="#0ff"/><rect x="9" y="4" width="1" height="1" fill="#000"/><rect x="10" y="4" width="2" height="1" fill="#0ff"/><rect x="12" y="4" width="1" height="1" fill="#000"/><rect x="0" y="5" width="1" height="1" fill="#000"/><rect x="1" y="5" width="1" height="1" fill="#0ff"/><rect x="2" y="5" width="1" height="1" fill="#000"/><rect x="3" y="5" width="1" height="1" fill="#0ff"/><rect x="4" y="5" width="1" height="1" fill="#000"/><rect x="5" y="5" width="7" height="1" fill="#0ff"/><rect x="12" y="5" width="1" height="1" fill="#000"/><rect x="0" y="6" width="1" height="1" fill="#000"/><rect x="1" y="6" width="3" height="1" fill="#0ff"/><rect x="4" y="6" width="1" height="1" fill="#000"/><rect x="5" y="6" width="1" height="1" fill="#0ff"/><rect x="6" y="6" width="1" height="1" fill="#000"/><rect x="7" y="6" width="1" height="1" fill="#0ff"/><rect x="8" y="6" width="1" height="1" fill="#000"/><rect x="9" y="6" width="1" height="1" fill="#0ff"/><rect x="10" y="6" width="1" height="1" fill="#000"/><rect x="11" y="6" width="1" height="1" fill="#0ff"/><rect x="12" y="6" width="1" height="1" fill="#000"/><rect x="0" y="7" width="5" height="1" fill="#000"/><rect x="5" y="7" width="7" height="1" fill="#0ff"/><rect x="12" y="7" width="1" height="1" fill="#000"/><rect x="0" y="8" width="1" height="1" fill="#000"/><rect x="1" y="8" width="3" height="1" fill="#0ff"/><rect x="4" y="8" width="1" height="1" fill="#000"/><rect x="5" y="8" width="7" height="1" fill="#0ff"/><rect x="12" y="8" width="1" height="1" fill="#000"/><rect x="0" y="9" width="1" height="1" fill="#000"/><rect x="1" y="9" width="1" height="1" fill="#0ff"/><rect x="2" y="9" width="1" height="1" fill="#000"/><rect x="3" y="9" width="1" height="1" fill="#0ff"/><rect x="4" y="9" width="9" height="1" fill="#000"/><rect x="0" y="10" width="1" height="1" fill="#000"/><rect x="1" y="10" width="3" height="1" fill="#0ff"/><rect x="4" y="10" width="1" height="1" fill="#000"/><rect x="5" y="10" width="2" height="1" fill="#0ff"/><rect x="7" y="10" width="1" height="1" fill="#000"/><rect x="8" y="10" width="4" height="1" fill="#0ff"/><rect x="12" y="10" width="1" height="1" fill="#000"/><rect x="0" y="11" width="1" height="1" fill="#000"/><rect x="1" y="11" width="1" height="1" fill="#0ff"/><rect x="2" y="11" width="1" height="1" fill="#000"/><rect x="3" y="11" width="1" height="1" fill="#0ff"/><rect x="4" y="11" width="1" height="1" fill="#000"/><rect x="5" y="11" width="2" height="1" fill="#0ff"/><rect x="7" y="11" width="1" height="1" fill="#000"/><rect x="8" y="11" width="1" height="1" fill="#0ff"/><rect x="9" y="11" width="1" height="1" fill="#000"/><rect x="10" y="11" width="2" height="1" fill="#0ff"/><rect x="12" y="11" width="1" height="1" fill="#000"/><rect x="0" y="12" width="1" height="1" fill="#000"/><rect x="1" y="12" width="3" height="1" fill="#0ff"/><rect x="4" y="12" width="1" height="1" fill="#000"/><rect x="5" y="12" width="2" height="1" fill="#0ff"/><rect x="7" y="12" width="1" height="1" fill="#000"/><rect x="8" y="12" width="4" height="1" fill="#0ff"/><rect x="12" y="12" width="1" height="1" fill="#000"/><rect x="0" y="13" width="13" height="1" fill="#000"/></svg>
<svg class="a" style="left:319px;top:54px;" width="13" height="14" shape-rendering="crispEdges"><rect x="0" y="0" width="13" height="1" fill="#000"/><rect x="0" y="1" width="1" height="1" fill="#000"/><rect x="1" y="1" width="3" height="1" fill="#0ff"/><rect x="4" y="1" width="1" height="1" fill="#000"/><rect x="5" y="1" width="7" height="1" fill="#0ff"/><rect x="12" y="1" width="1" height="1" fill="#000"/><rect x="0" y="2" width="1" height="1" fill="#000"/><rect x="1" y="2" width="3" height="1" fill="#0ff"/><rect x="4" y="2" width="1" height="1" fill="#000"/><rect x="5" y="2" width="3" height="1" fill="#0ff"/><rect x="8" y="2" width="1" height="1" fill="#000"/><rect x="9" y="2" width="3" height="1" fill="#0ff"/><rect x="12" y="2" width="1" height="1" fill="#000"/><rect x="0" y="3" width="1" height="1" fill="#000"/><rect x="1" y="3" width="1" height="1" fill="#0ff"/><rect x="2" y="3" width="1" height="1" fill="#000"/><rect x="3" y="3" width="1" height="1" fill="#0ff"/><rect x="4" y="3" width="1" height="1" fill="#000"/><rect x="5" y="3" width="7" height="1" fill="#0ff"/><rect x="12" y="3" width="1" height="1" fill="#000"/><rect x="0" y="4" width="1" height="1" fill="#000"/><rect x="1" y="4" width="3" height="1" fill="#0ff"/><rect x="4" y="4" width="1" height="1" fill="#000"/><rect x="5" y="4" width="2" height="1" fill="#0ff"/><rect x="7" y="4" width="1" height="1" fill="#000"/><rect x="8" y="4" width="1" height="1" fill="#0ff"/><rect x="9" y="4" width="1" height="1" fill="#000"/><rect x="10" y="4" width="2" height="1" fill="#0ff"/><rect x="12" y="4" width="1" height="1" fill="#000"/><rect x="0" y="5" width="1" height="1" fill="#000"/><rect x="1" y="5" width="1" height="1" fill="#0ff"/><rect x="2" y="5" width="1" height="1" fill="#000"/><rect x="3" y="5" width="1" height="1" fill="#0ff"/><rect x="4" y="5" width="1" height="1" fill="#000"/><rect x="5" y="5" width="7" height="1" fill="#0ff"/><rect x="12" y="5" width="1" height="1" fill="#000"/><rect x="0" y="6" width="1" height="1" fill="#000"/><rect x="1" y="6" width="3" height="1" fill="#0ff"/><rect x="4" y="6" width="1" height="1" fill="#000"/><rect x="5" y="6" width="1" height="1" fill="#0ff"/><rect x="6" y="6" width="1" height="1" fill="#000"/><rect x="7" y="6" width="1" height="1" fill="#0ff"/><rect x="8" y="6" width="1" height="1" fill="#000"/><rect x="9" y="6" width="1" height="1" fill="#0ff"/><rect x="10" y="6" width="1" height="1" fill="#000"/><rect x="11" y="6" width="1" height="1" fill="#0ff"/><rect x="12" y="6" width="1" height="1" fill="#000"/><rect x="0" y="7" width="5" height="1" fill="#000"/><rect x="5" y="7" width="7" height="1" fill="#0ff"/><rect x="12" y="7" width="1" height="1" fill="#000"/><rect x="0" y="8" width="1" height="1" fill="#000"/><rect x="1" y="8" width="3" height="1" fill="#0ff"/><rect x="4" y="8" width="2" height="1" fill="#000"/><rect x="6" y="8" width="1" height="1" fill="#0ff"/><rect x="7" y="8" width="1" height="1" fill="#000"/><rect x="8" y="8" width="1" height="1" fill="#0ff"/><rect x="9" y="8" width="1" height="1" fill="#000"/><rect x="10" y="8" width="1" height="1" fill="#0ff"/><rect x="11" y="8" width="2" height="1" fill="#000"/><rect x="0" y="9" width="1" height="1" fill="#000"/><rect x="1" y="9" width="1" height="1" fill="#0ff"/><rect x="2" y="9" width="1" height="1" fill="#000"/><rect x="3" y="9" width="1" height="1" fill="#0ff"/><rect x="4" y="9" width="1" height="1" fill="#000"/><rect x="5" y="9" width="7" height="1" fill="#0ff"/><rect x="12" y="9" width="1" height="1" fill="#000"/><rect x="0" y="10" width="1" height="1" fill="#000"/><rect x="1" y="10" width="3" height="1" fill="#0ff"/><rect x="4" y="10" width="1" height="1" fill="#000"/><rect x="5" y="10" width="1" height="1" fill="#0ff"/><rect x="6" y="10" width="1" height="1" fill="#000"/><rect x="7" y="10" width="1" height="1" fill="#0ff"/><rect x="8" y="10" width="1" height="1" fill="#000"/><rect x="9" y="10" width="1" height="1" fill="#0ff"/><rect x="10" y="10" width="1" height="1" fill="#000"/><rect x="11" y="10" width="1" height="1" fill="#0ff"/><rect x="12" y="10" width="1" height="1" fill="#000"/><rect x="0" y="11" width="1" height="1" fill="#000"/><rect x="1" y="11" width="1" height="1" fill="#0ff"/><rect x="2" y="11" width="1" height="1" fill="#000"/><rect x="3" y="11" width="1" height="1" fill="#0ff"/><rect x="4" y="11" width="1" height="1" fill="#000"/><rect x="5" y="11" width="7" height="1" fill="#0ff"/><rect x="12" y="11" width="1" height="1" fill="#000"/><rect x="0" y="12" width="1" height="1" fill="#000"/><rect x="1" y="12" width="3" height="1" fill="#0ff"/><rect x="4" y="12" width="1" height="1" fill="#000"/><rect x="5" y="12" width="7" height="1" fill="#0ff"/><rect x="12" y="12" width="1" height="1" fill="#000"/><rect x="0" y="13" width="13" height="1" fill="#000"/></svg>
<svg class="a" style="left:342px;top:54px;" width="13" height="14" shape-rendering="crispEdges"><rect x="0" y="0" width="13" height="1" fill="#000"/><rect x="0" y="1" width="1" height="1" fill="#000"/><rect x="1" y="1" width="11" height="1" fill="#0ff"/><rect x="12" y="1" width="1" height="1" fill="#000"/><rect x="0" y="2" width="1" height="1" fill="#000"/><rect x="1" y="2" width="5" height="1" fill="#0ff"/><rect x="6" y="2" width="1" height="1" fill="#000"/><rect x="7" y="2" width="5" height="1" fill="#0ff"/><rect x="12" y="2" width="1" height="1" fill="#000"/><rect x="0" y="3" width="1" height="1" fill="#000"/><rect x="1" y="3" width="11" height="1" fill="#0ff"/><rect x="12" y="3" width="1" height="1" fill="#000"/><rect x="0" y="4" width="1" height="1" fill="#000"/><rect x="1" y="4" width="4" height="1" fill="#0ff"/><rect x="5" y="4" width="1" height="1" fill="#000"/><rect x="6" y="4" width="1" height="1" fill="#0ff"/><rect x="7" y="4" width="1" height="1" fill="#000"/><rect x="8" y="4" width="4" height="1" fill="#0ff"/><rect x="12" y="4" width="1" height="1" fill="#000"/><rect x="0" y="5" width="1" height="1" fill="#000"/><rect x="1" y="5" width="11" height="1" fill="#0ff"/><rect x="12" y="5" width="1" height="1" fill="#000"/><rect x="0" y="6" width="1" height="1" fill="#000"/><rect x="1" y="6" width="3" height="1" fill="#0ff"/><rect x="4" y="6" width="1" height="1" fill="#000"/><rect x="5" y="6" width="1" height="1" fill="#0ff"/><rect x="6" y="6" width="1" height="1" fill="#000"/><rect x="7" y="6" width="1" height="1" fill="#0ff"/><rect x="8" y="6" width="1" height="1" fill="#000"/><rect x="9" y="6" width="3" height="1" fill="#0ff"/><rect x="12" y="6" width="1" height="1" fill="#000"/><rect x="0" y="7" width="1" height="1" fill="#000"/><rect x="1" y="7" width="11" height="1" fill="#0ff"/><rect x="12" y="7" width="1" height="1" fill="#000"/><rect x="0" y="8" width="1" height="1" fill="#000"/><rect x="1" y="8" width="11" height="1" fill="#0ff"/><rect x="12" y="8" width="1" height="1" fill="#000"/><rect x="0" y="9" width="13" height="1" fill="#000"/><rect x="0" y="10" width="1" height="1" fill="#000"/><rect x="1" y="10" width="3" height="1" fill="#0ff"/><rect x="4" y="10" width="1" height="1" fill="#000"/><rect x="5" y="10" width="7" height="1" fill="#0ff"/><rect x="12" y="10" width="1" height="1" fill="#000"/><rect x="0" y="11" width="1" height="1" fill="#000"/><rect x="1" y="11" width="1" height="1" fill="#0ff"/><rect x="2" y="11" width="1" height="1" fill="#000"/><rect x="3" y="11" width="1" height="1" fill="#0ff"/><rect x="4" y="11" width="1" height="1" fill="#000"/><rect x="5" y="11" width="1" height="1" fill="#0ff"/><rect x="6" y="11" width="1" height="1" fill="#000"/><rect x="7" y="11" width="1" height="1" fill="#0ff"/><rect x="8" y="11" width="1" height="1" fill="#000"/><rect x="9" y="11" width="1" height="1" fill="#0ff"/><rect x="10" y="11" width="1" height="1" fill="#000"/><rect x="11" y="11" width="1" height="1" fill="#0ff"/><rect x="12" y="11" width="1" height="1" fill="#000"/><rect x="0" y="12" width="1" height="1" fill="#000"/><rect x="1" y="12" width="3" height="1" fill="#0ff"/><rect x="4" y="12" width="1" height="1" fill="#000"/><rect x="5" y="12" width="7" height="1" fill="#0ff"/><rect x="12" y="12" width="1" height="1" fill="#000"/><rect x="0" y="13" width="13" height="1" fill="#000"/></svg>
<svg class="a" style="left:365px;top:54px;" width="13" height="14" shape-rendering="crispEdges"><rect x="0" y="0" width="13" height="1" fill="#000"/><rect x="0" y="1" width="1" height="1" fill="#000"/><rect x="1" y="1" width="11" height="1" fill="#0ff"/><rect x="12" y="1" width="1" height="1" fill="#000"/><rect x="0" y="2" width="1" height="1" fill="#000"/><rect x="1" y="2" width="5" height="1" fill="#0ff"/><rect x="6" y="2" width="1" height="1" fill="#000"/><rect x="7" y="2" width="5" height="1" fill="#0ff"/><rect x="12" y="2" width="1" height="1" fill="#000"/><rect x="0" y="3" width="1" height="1" fill="#000"/><rect x="1" y="3" width="11" height="1" fill="#0ff"/><rect x="12" y="3" width="1" height="1" fill="#000"/><rect x="0" y="4" width="1" height="1" fill="#000"/><rect x="1" y="4" width="4" height="1" fill="#0ff"/><rect x="5" y="4" width="1" height="1" fill="#000"/><rect x="6" y="4" width="1" height="1" fill="#0ff"/><rect x="7" y="4" width="1" height="1" fill="#000"/><rect x="8" y="4" width="4" height="1" fill="#0ff"/><rect x="12" y="4" width="1" height="1" fill="#000"/><rect x="0" y="5" width="1" height="1" fill="#000"/><rect x="1" y="5" width="11" height="1" fill="#0ff"/><rect x="12" y="5" width="1" height="1" fill="#000"/><rect x="0" y="6" width="1" height="1" fill="#000"/><rect x="1" y="6" width="3" height="1" fill="#0ff"/><rect x="4" y="6" width="1" height="1" fill="#000"/><rect x="5" y="6" width="1" height="1" fill="#0ff"/><rect x="6" y="6" width="1" height="1" fill="#000"/><rect x="7" y="6" width="1" height="1" fill="#0ff"/><rect x="8" y="6" width="1" height="1" fill="#000"/><rect x="9" y="6" width="3" height="1" fill="#0ff"/><rect x="12" y="6" width="1" height="1" fill="#000"/><rect x="0" y="7" width="1" height="1" fill="#000"/><rect x="1" y="7" width="11" height="1" fill="#0ff"/><rect x="12" y="7" width="1" height="1" fill="#000"/><rect x="0" y="8" width="1" height="1" fill="#000"/><rect x="1" y="8" width="2" height="1" fill="#0ff"/><rect x="3" y="8" width="1" height="1" fill="#000"/><rect x="4" y="8" width="1" height="1" fill="#0ff"/><rect x="5" y="8" width="1" height="1" fill="#000"/><rect x="6" y="8" width="1" height="1" fill="#0ff"/><rect x="7" y="8" width="1" height="1" fill="#000"/><rect x="8" y="8" width="1" height="1" fill="#0ff"/><rect x="9" y="8" width="1" height="1" fill="#000"/><rect x="10" y="8" width="2" height="1" fill="#0ff"/><rect x="12" y="8" width="1" height="1" fill="#000"/><rect x="0" y="9" width="1" height="1" fill="#000"/><rect x="1" y="9" width="11" height="1" fill="#0ff"/><rect x="12" y="9" width="1" height="1" fill="#000"/><rect x="0" y="10" width="1" height="1" fill="#000"/><rect x="1" y="10" width="3" height="1" fill="#0ff"/><rect x="4" y="10" width="1" height="1" fill="#000"/><rect x="5" y="10" width="1" height="1" fill="#0ff"/><rect x="6" y="10" width="1" height="1" fill="#000"/><rect x="7" y="10" width="1" height="1" fill="#0ff"/><rect x="8" y="10" width="1" height="1" fill="#000"/><rect x="9" y="10" width="1" height="1" fill="#0ff"/><rect x="10" y="10" width="1" height="1" fill="#000"/><rect x="11" y="10" width="1" height="1" fill="#0ff"/><rect x="12" y="10" width="1" height="1" fill="#000"/><rect x="0" y="11" width="1" height="1" fill="#000"/><rect x="1" y="11" width="11" height="1" fill="#0ff"/><rect x="12" y="11" width="1" height="1" fill="#000"/><rect x="0" y="12" width="1" height="1" fill="#000"/><rect x="1" y="12" width="11" height="1" fill="#0ff"/><rect x="12" y="12" width="1" height="1" fill="#000"/><rect x="0" y="13" width="13" height="1" fill="#000"/></svg>
<div class="a tb" style="left:393px;top:48px;width:27px;height:27px;"></div>
<div class="a" style="left:398px;top:53px;width:16px;height:16px;background:#b8b8b8;"></div>
<div class="a tb" style="left:420px;top:48px;width:27px;height:27px;"></div>
<div class="a" style="left:425px;top:53px;width:16px;height:16px;background:#b8b8b8;"></div>
<div class="a tb" style="left:447px;top:48px;width:27px;height:27px;"></div>
<div class="a" style="left:452px;top:53px;width:16px;height:16px;background:#b8b8b8;"></div>
<div class="a tb" style="left:474px;top:48px;width:27px;height:27px;"></div>
<div class="a" style="left:479px;top:53px;width:16px;height:16px;background:#b8b8b8;"></div>
<div class="a tb" style="left:501px;top:48px;width:27px;height:27px;"></div>
<div class="a" style="left:506px;top:53px;width:16px;height:16px;background:#b8b8b8;"></div>
<div class="a tb" style="left:528px;top:48px;width:27px;height:27px;"></div>
<div class="a" style="left:533px;top:53px;width:16px;height:16px;background:#b8b8b8;"></div>
<div class="a tb" style="left:555px;top:48px;width:27px;height:27px;"></div>
<div class="a" style="left:560px;top:53px;width:16px;height:16px;background:#b8b8b8;"></div>
<svg class="a" style="left:398px;top:53px;" width="17" height="17" shape-rendering="crispEdges"><rect x="3" y="0" width="6" height="1" fill="#300000"/><rect x="2" y="1" width="1" height="1" fill="#300000"/><rect x="3" y="1" width="6" height="1" fill="#fff"/><rect x="9" y="1" width="1" height="1" fill="#300000"/><rect x="1" y="2" width="1" height="1" fill="#300000"/><rect x="2" y="2" width="3" height="1" fill="#fff"/><rect x="5" y="2" width="2" height="1" fill="#00f"/><rect x="7" y="2" width="3" height="1" fill="#fff"/><rect x="10" y="2" width="1" height="1" fill="#300000"/><rect x="0" y="3" width="1" height="1" fill="#300000"/><rect x="1" y="3" width="4" height="1" fill="#fff"/><rect x="5" y="3" width="2" height="1" fill="#00f"/><rect x="7" y="3" width="4" height="1" fill="#fff"/><rect x="11" y="3" width="1" height="1" fill="#300000"/><rect x="0" y="4" width="1" height="1" fill="#300000"/><rect x="1" y="4" width="4" height="1" fill="#fff"/><rect x="5" y="4" width="2" height="1" fill="#00f"/><rect x="7" y="4" width="4" height="1" fill="#fff"/><rect x="11" y="4" width="1" height="1" fill="#300000"/><rect x="0" y="5" width="1" height="1" fill="#300000"/><rect x="1" y="5" width="1" height="1" fill="#fff"/><rect x="2" y="5" width="8" height="1" fill="#00f"/><rect x="10" y="5" width="1" height="1" fill="#fff"/><rect x="11" y="5" width="1" height="1" fill="#300000"/><rect x="0" y="6" width="1" height="1" fill="#300000"/><rect x="1" y="6" width="1" height="1" fill="#fff"/><rect x="2" y="6" width="8" height="1" fill="#00f"/><rect x="10" y="6" width="1" height="1" fill="#fff"/><rect x="11" y="6" width="1" height="1" fill="#300000"/><rect x="0" y="7" width="1" height="1" fill="#300000"/><rect x="1" y="7" width="4" height="1" fill="#fff"/><rect x="5" y="7" width="2" height="1" fill="#00f"/><rect x="7" y="7" width="4" height="1" fill="#fff"/><rect x="11" y="7" width="1" height="1" fill="#300000"/><rect x="0" y="8" width="1" height="1" fill="#300000"/><rect x="1" y="8" width="4" height="1" fill="#fff"/><rect x="5" y="8" width="2" height="1" fill="#00f"/><rect x="7" y="8" width="4" height="1" fill="#fff"/><rect x="11" y="8" width="1" height="1" fill="#300000"/><rect x="1" y="9" width="1" height="1" fill="#300000"/><rect x="2" y="9" width="3" height="1" fill="#fff"/><rect x="5" y="9" width="2" height="1" fill="#00f"/><rect x="7" y="9" width="3" height="1" fill="#fff"/><rect x="10" y="9" width="1" height="1" fill="#300000"/><rect x="2" y="10" width="1" height="1" fill="#300000"/><rect x="3" y="10" width="6" height="1" fill="#fff"/><rect x="9" y="10" width="1" height="1" fill="#300000"/><rect x="10" y="10" width="2" height="1" fill="#000"/><rect x="3" y="11" width="6" height="1" fill="#300000"/><rect x="9" y="11" width="1" height="1" fill="#000"/><rect x="10" y="11" width="2" height="1" fill="#ff0"/><rect x="12" y="11" width="1" height="1" fill="#000"/><rect x="9" y="12" width="1" height="1" fill="#000"/><rect x="10" y="12" width="3" height="1" fill="#ff0"/><rect x="13" y="12" width="1" height="1" fill="#000"/><rect x="10" y="13" width="1" height="1" fill="#000"/><rect x="11" y="13" width="3" height="1" fill="#ff0"/><rect x="14" y="13" width="1" height="1" fill="#000"/><rect x="11" y="14" width="1" height="1" fill="#000"/><rect x="12" y="14" width="3" height="1" fill="#ff0"/><rect x="15" y="14" width="1" height="1" fill="#000"/><rect x="12" y="15" width="1" height="1" fill="#000"/><rect x="13" y="15" width="2" height="1" fill="#ff0"/><rect x="15" y="15" width="1" height="1" fill="#000"/><rect x="13" y="16" width="2" height="1" fill="#000"/></svg>
<svg class="a" style="left:425px;top:53px;" width="17" height="17" shape-rendering="crispEdges"><rect x="3" y="0" width="6" height="1" fill="#300000"/><rect x="2" y="1" width="1" height="1" fill="#300000"/><rect x="3" y="1" width="6" height="1" fill="#fff"/><rect x="9" y="1" width="1" height="1" fill="#300000"/><rect x="1" y="2" width="1" height="1" fill="#300000"/><rect x="2" y="2" width="8" height="1" fill="#fff"/><rect x="10" y="2" width="1" height="1" fill="#300000"/><rect x="0" y="3" width="1" height="1" fill="#300000"/><rect x="1" y="3" width="10" height="1" fill="#fff"/><rect x="11" y="3" width="1" height="1" fill="#300000"/><rect x="0" y="4" width="1" height="1" fill="#300000"/><rect x="1" y="4" width="10" height="1" fill="#fff"/><rect x="11" y="4" width="1" height="1" fill="#300000"/><rect x="0" y="5" width="1" height="1" fill="#300000"/><rect x="1" y="5" width="1" height="1" fill="#fff"/><rect x="2" y="5" width="8" height="1" fill="#00f"/><rect x="10" y="5" width="1" height="1" fill="#fff"/><rect x="11" y="5" width="1" height="1" fill="#300000"/><rect x="0" y="6" width="1" height="1" fill="#300000"/><rect x="1" y="6" width="1" height="1" fill="#fff"/><rect x="2" y="6" width="8" height="1" fill="#00f"/><rect x="10" y="6" width="1" height="1" fill="#fff"/><rect x="11" y="6" width="1" height="1" fill="#300000"/><rect x="0" y="7" width="1" height="1" fill="#300000"/><rect x="1" y="7" width="10" height="1" fill="#fff"/><rect x="11" y="7" width="1" height="1" fill="#300000"/><rect x="0" y="8" width="1" height="1" fill="#300000"/><rect x="1" y="8" width="10" height="1" fill="#fff"/><rect x="11" y="8" width="1" height="1" fill="#300000"/><rect x="1" y="9" width="1" height="1" fill="#300000"/><rect x="2" y="9" width="8" height="1" fill="#fff"/><rect x="10" y="9" width="1" height="1" fill="#300000"/><rect x="2" y="10" width="1" height="1" fill="#300000"/><rect x="3" y="10" width="6" height="1" fill="#fff"/><rect x="9" y="10" width="1" height="1" fill="#300000"/><rect x="10" y="10" width="2" height="1" fill="#000"/><rect x="3" y="11" width="6" height="1" fill="#300000"/><rect x="9" y="11" width="1" height="1" fill="#000"/><rect x="10" y="11" width="2" height="1" fill="#ff0"/><rect x="12" y="11" width="1" height="1" fill="#000"/><rect x="9" y="12" width="1" height="1" fill="#000"/><rect x="10" y="12" width="3" height="1" fill="#ff0"/><rect x="13" y="12" width="1" height="1" fill="#000"/><rect x="10" y="13" width="1" height="1" fill="#000"/><rect x="11" y="13" width="3" height="1" fill="#ff0"/><rect x="14" y="13" width="1" height="1" fill="#000"/><rect x="11" y="14" width="1" height="1" fill="#000"/><rect x="12" y="14" width="3" height="1" fill="#ff0"/><rect x="15" y="14" width="1" height="1" fill="#000"/><rect x="12" y="15" width="1" height="1" fill="#000"/><rect x="13" y="15" width="2" height="1" fill="#ff0"/><rect x="15" y="15" width="1" height="1" fill="#000"/><rect x="13" y="16" width="2" height="1" fill="#000"/></svg>
<svg class="a" style="left:452px;top:53px;" width="17" height="17" shape-rendering="crispEdges"><rect x="3" y="0" width="6" height="1" fill="#300000"/><rect x="2" y="1" width="1" height="1" fill="#300000"/><rect x="3" y="1" width="6" height="1" fill="#fff"/><rect x="9" y="1" width="1" height="1" fill="#300000"/><rect x="1" y="2" width="1" height="1" fill="#300000"/><rect x="2" y="2" width="8" height="1" fill="#fff"/><rect x="10" y="2" width="1" height="1" fill="#300000"/><rect x="0" y="3" width="1" height="1" fill="#300000"/><rect x="1" y="3" width="2" height="1" fill="#fff"/><rect x="3" y="3" width="6" height="1" fill="#00f"/><rect x="9" y="3" width="2" height="1" fill="#fff"/><rect x="11" y="3" width="1" height="1" fill="#300000"/><rect x="0" y="4" width="1" height="1" fill="#300000"/><rect x="1" y="4" width="2" height="1" fill="#fff"/><rect x="3" y="4" width="6" height="1" fill="#00f"/><rect x="9" y="4" width="2" height="1" fill="#fff"/><rect x="11" y="4" width="1" height="1" fill="#300000"/><rect x="0" y="5" width="1" height="1" fill="#300000"/><rect x="1" y="5" width="2" height="1" fill="#fff"/><rect x="3" y="5" width="6" height="1" fill="#00f"/><rect x="9" y="5" width="2" height="1" fill="#fff"/><rect x="11" y="5" width="1" height="1" fill="#300000"/><rect x="0" y="6" width="1" height="1" fill="#300000"/><rect x="1" y="6" width="2" height="1" fill="#fff"/><rect x="3" y="6" width="6" height="1" fill="#00f"/><rect x="9" y="6" width="2" height="1" fill="#fff"/><rect x="11" y="6" width="1" height="1" fill="#300000"/><rect x="0" y="7" width="1" height="1" fill="#300000"/><rect x="1" y="7" width="2" height="1" fill="#fff"/><rect x="3" y="7" width="6" height="1" fill="#00f"/><rect x="9" y="7" width="2" height="1" fill="#fff"/><rect x="11" y="7" width="1" height="1" fill="#300000"/><rect x="0" y="8" width="1" height="1" fill="#300000"/><rect x="1" y="8" width="2" height="1" fill="#fff"/><rect x="3" y="8" width="6" height="1" fill="#00f"/><rect x="9" y="8" width="2" height="1" fill="#fff"/><rect x="11" y="8" width="1" height="1" fill="#300000"/><rect x="1" y="9" width="1" height="1" fill="#300000"/><rect x="2" y="9" width="8" height="1" fill="#fff"/><rect x="10" y="9" width="1" height="1" fill="#300000"/><rect x="2" y="10" width="1" height="1" fill="#300000"/><rect x="3" y="10" width="6" height="1" fill="#fff"/><rect x="9" y="10" width="1" height="1" fill="#300000"/><rect x="10" y="10" width="2" height="1" fill="#000"/><rect x="3" y="11" width="6" height="1" fill="#300000"/><rect x="9" y="11" width="1" height="1" fill="#000"/><rect x="10" y="11" width="2" height="1" fill="#ff0"/><rect x="12" y="11" width="1" height="1" fill="#000"/><rect x="9" y="12" width="1" height="1" fill="#000"/><rect x="10" y="12" width="3" height="1" fill="#ff0"/><rect x="13" y="12" width="1" height="1" fill="#000"/><rect x="10" y="13" width="1" height="1" fill="#000"/><rect x="11" y="13" width="3" height="1" fill="#ff0"/><rect x="14" y="13" width="1" height="1" fill="#000"/><rect x="11" y="14" width="1" height="1" fill="#000"/><rect x="12" y="14" width="3" height="1" fill="#ff0"/><rect x="15" y="14" width="1" height="1" fill="#000"/><rect x="12" y="15" width="1" height="1" fill="#000"/><rect x="13" y="15" width="2" height="1" fill="#ff0"/><rect x="15" y="15" width="1" height="1" fill="#000"/><rect x="13" y="16" width="2" height="1" fill="#000"/></svg>
<svg class="a" style="left:479px;top:53px;" width="17" height="17" shape-rendering="crispEdges"><rect x="3" y="0" width="6" height="1" fill="#300000"/><rect x="2" y="1" width="1" height="1" fill="#300000"/><rect x="3" y="1" width="6" height="1" fill="#fff"/><rect x="9" y="1" width="1" height="1" fill="#300000"/><rect x="1" y="2" width="1" height="1" fill="#300000"/><rect x="2" y="2" width="8" height="1" fill="#fff"/><rect x="10" y="2" width="1" height="1" fill="#300000"/><rect x="0" y="3" width="1" height="1" fill="#300000"/><rect x="1" y="3" width="10" height="1" fill="#fff"/><rect x="11" y="3" width="1" height="1" fill="#300000"/><rect x="0" y="4" width="1" height="1" fill="#300000"/><rect x="1" y="4" width="3" height="1" fill="#fff"/><rect x="4" y="4" width="4" height="1" fill="#00f"/><rect x="8" y="4" width="3" height="1" fill="#fff"/><rect x="11" y="4" width="1" height="1" fill="#300000"/><rect x="0" y="5" width="1" height="1" fill="#300000"/><rect x="1" y="5" width="3" height="1" fill="#fff"/><rect x="4" y="5" width="4" height="1" fill="#00f"/><rect x="8" y="5" width="3" height="1" fill="#fff"/><rect x="11" y="5" width="1" height="1" fill="#300000"/><rect x="0" y="6" width="1" height="1" fill="#300000"/><rect x="1" y="6" width="3" height="1" fill="#fff"/><rect x="4" y="6" width="4" height="1" fill="#00f"/><rect x="8" y="6" width="3" height="1" fill="#fff"/><rect x="11" y="6" width="1" height="1" fill="#300000"/><rect x="0" y="7" width="1" height="1" fill="#300000"/><rect x="1" y="7" width="3" height="1" fill="#fff"/><rect x="4" y="7" width="4" height="1" fill="#00f"/><rect x="8" y="7" width="3" height="1" fill="#fff"/><rect x="11" y="7" width="1" height="1" fill="#300000"/><rect x="0" y="8" width="1" height="1" fill="#300000"/><rect x="1" y="8" width="10" height="1" fill="#fff"/><rect x="11" y="8" width="1" height="1" fill="#300000"/><rect x="1" y="9" width="1" height="1" fill="#300000"/><rect x="2" y="9" width="8" height="1" fill="#fff"/><rect x="10" y="9" width="1" height="1" fill="#300000"/><rect x="2" y="10" width="1" height="1" fill="#300000"/><rect x="3" y="10" width="6" height="1" fill="#fff"/><rect x="9" y="10" width="1" height="1" fill="#300000"/><rect x="10" y="10" width="2" height="1" fill="#000"/><rect x="3" y="11" width="6" height="1" fill="#300000"/><rect x="9" y="11" width="1" height="1" fill="#000"/><rect x="10" y="11" width="2" height="1" fill="#ff0"/><rect x="12" y="11" width="1" height="1" fill="#000"/><rect x="9" y="12" width="1" height="1" fill="#000"/><rect x="10" y="12" width="3" height="1" fill="#ff0"/><rect x="13" y="12" width="1" height="1" fill="#000"/><rect x="10" y="13" width="1" height="1" fill="#000"/><rect x="11" y="13" width="3" height="1" fill="#ff0"/><rect x="14" y="13" width="1" height="1" fill="#000"/><rect x="11" y="14" width="1" height="1" fill="#000"/><rect x="12" y="14" width="3" height="1" fill="#ff0"/><rect x="15" y="14" width="1" height="1" fill="#000"/><rect x="12" y="15" width="1" height="1" fill="#000"/><rect x="13" y="15" width="2" height="1" fill="#ff0"/><rect x="15" y="15" width="1" height="1" fill="#000"/><rect x="13" y="16" width="2" height="1" fill="#000"/></svg>
<svg class="a" style="left:506px;top:53px;" width="17" height="17" shape-rendering="crispEdges"><rect x="3" y="0" width="6" height="1" fill="#300000"/><rect x="2" y="1" width="1" height="1" fill="#300000"/><rect x="3" y="1" width="6" height="1" fill="#fff"/><rect x="9" y="1" width="1" height="1" fill="#300000"/><rect x="1" y="2" width="1" height="1" fill="#300000"/><rect x="2" y="2" width="8" height="1" fill="#fff"/><rect x="10" y="2" width="1" height="1" fill="#300000"/><rect x="0" y="3" width="1" height="1" fill="#300000"/><rect x="1" y="3" width="10" height="1" fill="#fff"/><rect x="11" y="3" width="1" height="1" fill="#300000"/><rect x="0" y="4" width="1" height="1" fill="#300000"/><rect x="1" y="4" width="10" height="1" fill="#fff"/><rect x="11" y="4" width="1" height="1" fill="#300000"/><rect x="0" y="5" width="1" height="1" fill="#300000"/><rect x="1" y="5" width="4" height="1" fill="#fff"/><rect x="5" y="5" width="2" height="1" fill="#00f"/><rect x="7" y="5" width="4" height="1" fill="#fff"/><rect x="11" y="5" width="1" height="1" fill="#300000"/><rect x="0" y="6" width="1" height="1" fill="#300000"/><rect x="1" y="6" width="4" height="1" fill="#fff"/><rect x="5" y="6" width="2" height="1" fill="#00f"/><rect x="7" y="6" width="4" height="1" fill="#fff"/><rect x="11" y="6" width="1" height="1" fill="#300000"/><rect x="0" y="7" width="1" height="1" fill="#300000"/><rect x="1" y="7" width="10" height="1" fill="#fff"/><rect x="11" y="7" width="1" height="1" fill="#300000"/><rect x="0" y="8" width="1" height="1" fill="#300000"/><rect x="1" y="8" width="10" height="1" fill="#fff"/><rect x="11" y="8" width="1" height="1" fill="#300000"/><rect x="1" y="9" width="1" height="1" fill="#300000"/><rect x="2" y="9" width="8" height="1" fill="#fff"/><rect x="10" y="9" width="1" height="1" fill="#300000"/><rect x="2" y="10" width="1" height="1" fill="#300000"/><rect x="3" y="10" width="6" height="1" fill="#fff"/><rect x="9" y="10" width="1" height="1" fill="#300000"/><rect x="10" y="10" width="2" height="1" fill="#000"/><rect x="3" y="11" width="6" height="1" fill="#300000"/><rect x="9" y="11" width="1" height="1" fill="#000"/><rect x="10" y="11" width="2" height="1" fill="#ff0"/><rect x="12" y="11" width="1" height="1" fill="#000"/><rect x="9" y="12" width="1" height="1" fill="#000"/><rect x="10" y="12" width="3" height="1" fill="#ff0"/><rect x="13" y="12" width="1" height="1" fill="#000"/><rect x="10" y="13" width="1" height="1" fill="#000"/><rect x="11" y="13" width="3" height="1" fill="#ff0"/><rect x="14" y="13" width="1" height="1" fill="#000"/><rect x="11" y="14" width="1" height="1" fill="#000"/><rect x="12" y="14" width="3" height="1" fill="#ff0"/><rect x="15" y="14" width="1" height="1" fill="#000"/><rect x="12" y="15" width="1" height="1" fill="#000"/><rect x="13" y="15" width="2" height="1" fill="#ff0"/><rect x="15" y="15" width="1" height="1" fill="#000"/><rect x="13" y="16" width="2" height="1" fill="#000"/></svg>
<svg class="a" style="left:533px;top:53px;" width="17" height="17" shape-rendering="crispEdges"><rect x="3" y="0" width="6" height="1" fill="#300000"/><rect x="2" y="1" width="1" height="1" fill="#300000"/><rect x="3" y="1" width="6" height="1" fill="#fff"/><rect x="9" y="1" width="1" height="1" fill="#300000"/><rect x="1" y="2" width="1" height="1" fill="#300000"/><rect x="2" y="2" width="8" height="1" fill="#fff"/><rect x="10" y="2" width="1" height="1" fill="#300000"/><rect x="0" y="3" width="1" height="1" fill="#300000"/><rect x="1" y="3" width="10" height="1" fill="#fff"/><rect x="11" y="3" width="1" height="1" fill="#300000"/><rect x="0" y="4" width="1" height="1" fill="#300000"/><rect x="1" y="4" width="10" height="1" fill="#fff"/><rect x="11" y="4" width="1" height="1" fill="#300000"/><rect x="0" y="5" width="1" height="1" fill="#300000"/><rect x="1" y="5" width="4" height="1" fill="#fff"/><rect x="5" y="5" width="1" height="1" fill="#00f"/><rect x="6" y="5" width="5" height="1" fill="#fff"/><rect x="11" y="5" width="1" height="1" fill="#300000"/><rect x="0" y="6" width="1" height="1" fill="#300000"/><rect x="1" y="6" width="10" height="1" fill="#fff"/><rect x="11" y="6" width="1" height="1" fill="#300000"/><rect x="0" y="7" width="1" height="1" fill="#300000"/><rect x="1" y="7" width="10" height="1" fill="#fff"/><rect x="11" y="7" width="1" height="1" fill="#300000"/><rect x="0" y="8" width="1" height="1" fill="#300000"/><rect x="1" y="8" width="10" height="1" fill="#fff"/><rect x="11" y="8" width="1" height="1" fill="#300000"/><rect x="1" y="9" width="1" height="1" fill="#300000"/><rect x="2" y="9" width="8" height="1" fill="#fff"/><rect x="10" y="9" width="1" height="1" fill="#300000"/><rect x="2" y="10" width="1" height="1" fill="#300000"/><rect x="3" y="10" width="6" height="1" fill="#fff"/><rect x="9" y="10" width="1" height="1" fill="#300000"/><rect x="10" y="10" width="2" height="1" fill="#000"/><rect x="3" y="11" width="6" height="1" fill="#300000"/><rect x="9" y="11" width="1" height="1" fill="#000"/><rect x="10" y="11" width="2" height="1" fill="#ff0"/><rect x="12" y="11" width="1" height="1" fill="#000"/><rect x="9" y="12" width="1" height="1" fill="#000"/><rect x="10" y="12" width="3" height="1" fill="#ff0"/><rect x="13" y="12" width="1" height="1" fill="#000"/><rect x="10" y="13" width="1" height="1" fill="#000"/><rect x="11" y="13" width="3" height="1" fill="#ff0"/><rect x="14" y="13" width="1" height="1" fill="#000"/><rect x="11" y="14" width="1" height="1" fill="#000"/><rect x="12" y="14" width="3" height="1" fill="#ff0"/><rect x="15" y="14" width="1" height="1" fill="#000"/><rect x="12" y="15" width="1" height="1" fill="#000"/><rect x="13" y="15" width="2" height="1" fill="#ff0"/><rect x="15" y="15" width="1" height="1" fill="#000"/><rect x="13" y="16" width="2" height="1" fill="#000"/></svg>
<svg class="a" style="left:560px;top:53px;" width="17" height="17" shape-rendering="crispEdges"><rect x="3" y="0" width="6" height="1" fill="#300000"/><rect x="2" y="1" width="1" height="1" fill="#300000"/><rect x="3" y="1" width="6" height="1" fill="#00f"/><rect x="9" y="1" width="1" height="1" fill="#300000"/><rect x="1" y="2" width="1" height="1" fill="#300000"/><rect x="2" y="2" width="8" height="1" fill="#00f"/><rect x="10" y="2" width="1" height="1" fill="#300000"/><rect x="0" y="3" width="1" height="1" fill="#300000"/><rect x="1" y="3" width="10" height="1" fill="#00f"/><rect x="11" y="3" width="1" height="1" fill="#300000"/><rect x="0" y="4" width="1" height="1" fill="#300000"/><rect x="1" y="4" width="10" height="1" fill="#00f"/><rect x="11" y="4" width="1" height="1" fill="#300000"/><rect x="0" y="5" width="1" height="1" fill="#300000"/><rect x="1" y="5" width="10" height="1" fill="#00f"/><rect x="11" y="5" width="1" height="1" fill="#300000"/><rect x="0" y="6" width="1" height="1" fill="#300000"/><rect x="1" y="6" width="10" height="1" fill="#00f"/><rect x="11" y="6" width="1" height="1" fill="#300000"/><rect x="0" y="7" width="1" height="1" fill="#300000"/><rect x="1" y="7" width="10" height="1" fill="#00f"/><rect x="11" y="7" width="1" height="1" fill="#300000"/><rect x="0" y="8" width="1" height="1" fill="#300000"/><rect x="1" y="8" width="10" height="1" fill="#00f"/><rect x="11" y="8" width="1" height="1" fill="#300000"/><rect x="1" y="9" width="1" height="1" fill="#300000"/><rect x="2" y="9" width="8" height="1" fill="#00f"/><rect x="10" y="9" width="1" height="1" fill="#300000"/><rect x="2" y="10" width="1" height="1" fill="#300000"/><rect x="3" y="10" width="6" height="1" fill="#00f"/><rect x="9" y="10" width="1" height="1" fill="#300000"/><rect x="10" y="10" width="2" height="1" fill="#000"/><rect x="3" y="11" width="6" height="1" fill="#300000"/><rect x="9" y="11" width="1" height="1" fill="#000"/><rect x="10" y="11" width="2" height="1" fill="#ff0"/><rect x="12" y="11" width="1" height="1" fill="#000"/><rect x="9" y="12" width="1" height="1" fill="#000"/><rect x="10" y="12" width="3" height="1" fill="#ff0"/><rect x="13" y="12" width="1" height="1" fill="#000"/><rect x="10" y="13" width="1" height="1" fill="#000"/><rect x="11" y="13" width="3" height="1" fill="#ff0"/><rect x="14" y="13" width="1" height="1" fill="#000"/><rect x="11" y="14" width="1" height="1" fill="#000"/><rect x="12" y="14" width="3" height="1" fill="#ff0"/><rect x="15" y="14" width="1" height="1" fill="#000"/><rect x="12" y="15" width="1" height="1" fill="#000"/><rect x="13" y="15" width="2" height="1" fill="#ff0"/><rect x="15" y="15" width="1" height="1" fill="#000"/><rect x="13" y="16" width="2" height="1" fill="#000"/></svg>
<div class="a sunken" style="left:592px;top:55px;width:13px;height:13px;background:#fff;"></div>
<div class="t" style="left:609px;top:57px;font-size:10px;letter-spacing:0.3px;">Bars</div>
<div class="a sunken" style="left:637px;top:55px;width:13px;height:13px;background:#fff;"></div>
<div class="t" style="left:655px;top:57px;font-size:10px;letter-spacing:0.3px;">Quits</div>
<div class="a sunken" style="left:686px;top:55px;width:13px;height:13px;background:#fff;"></div>
<div class="t" style="left:703px;top:57px;font-size:10px;letter-spacing:0.3px;">Pages</div>
<div class="a sunken" style="left:740px;top:55px;width:13px;height:13px;background:#c6c6c6;"></div>
<div class="t" style="left:758px;top:58px;font-size:10px;color:#fff;letter-spacing:0.45px;">Wallpaper</div>
<div class="t" style="left:757px;top:57px;font-size:10px;color:#808080;letter-spacing:0.45px;">Wallpaper</div>
<div class="a tb" style="left:813px;top:48px;width:25px;height:27px;"></div>
<div class="a tb" style="left:838px;top:48px;width:25px;height:27px;"></div>
<div class="a tb" style="left:883px;top:48px;width:27px;height:27px;"></div>
<svg class="a" style="left:821px;top:54px;" width="12" height="13" shape-rendering="crispEdges"><rect x="0" y="0" width="8" height="1" fill="#808080"/><rect x="0" y="1" width="1" height="1" fill="#808080"/><rect x="1" y="1" width="6" height="1" fill="#b8b8b8"/><rect x="7" y="1" width="2" height="1" fill="#808080"/><rect x="0" y="2" width="1" height="1" fill="#808080"/><rect x="1" y="2" width="6" height="1" fill="#b8b8b8"/><rect x="7" y="2" width="1" height="1" fill="#808080"/><rect x="8" y="2" width="1" height="1" fill="#b8b8b8"/><rect x="9" y="2" width="1" height="1" fill="#808080"/><rect x="0" y="3" width="1" height="1" fill="#808080"/><rect x="1" y="3" width="6" height="1" fill="#b8b8b8"/><rect x="7" y="3" width="4" height="1" fill="#808080"/><rect x="0" y="4" width="1" height="1" fill="#808080"/><rect x="1" y="4" width="4" height="1" fill="#b8b8b8"/><rect x="5" y="4" width="1" height="1" fill="#808080"/><rect x="6" y="4" width="4" height="1" fill="#b8b8b8"/><rect x="10" y="4" width="1" height="1" fill="#808080"/><rect x="0" y="5" width="1" height="1" fill="#808080"/><rect x="1" y="5" width="4" height="1" fill="#b8b8b8"/><rect x="5" y="5" width="1" height="1" fill="#808080"/><rect x="6" y="5" width="4" height="1" fill="#b8b8b8"/><rect x="10" y="5" width="1" height="1" fill="#808080"/><rect x="0" y="6" width="1" height="1" fill="#808080"/><rect x="1" y="6" width="4" height="1" fill="#b8b8b8"/><rect x="5" y="6" width="1" height="1" fill="#808080"/><rect x="6" y="6" width="4" height="1" fill="#b8b8b8"/><rect x="10" y="6" width="1" height="1" fill="#808080"/><rect x="0" y="7" width="1" height="1" fill="#808080"/><rect x="1" y="7" width="1" height="1" fill="#b8b8b8"/><rect x="2" y="7" width="7" height="1" fill="#808080"/><rect x="9" y="7" width="1" height="1" fill="#b8b8b8"/><rect x="10" y="7" width="1" height="1" fill="#808080"/><rect x="0" y="8" width="1" height="1" fill="#808080"/><rect x="1" y="8" width="4" height="1" fill="#b8b8b8"/><rect x="5" y="8" width="1" height="1" fill="#808080"/><rect x="6" y="8" width="4" height="1" fill="#b8b8b8"/><rect x="10" y="8" width="1" height="1" fill="#808080"/><rect x="0" y="9" width="1" height="1" fill="#808080"/><rect x="1" y="9" width="4" height="1" fill="#b8b8b8"/><rect x="5" y="9" width="1" height="1" fill="#808080"/><rect x="6" y="9" width="4" height="1" fill="#b8b8b8"/><rect x="10" y="9" width="1" height="1" fill="#808080"/><rect x="0" y="10" width="1" height="1" fill="#808080"/><rect x="1" y="10" width="4" height="1" fill="#b8b8b8"/><rect x="5" y="10" width="1" height="1" fill="#808080"/><rect x="6" y="10" width="4" height="1" fill="#b8b8b8"/><rect x="10" y="10" width="1" height="1" fill="#808080"/><rect x="0" y="11" width="1" height="1" fill="#808080"/><rect x="1" y="11" width="9" height="1" fill="#b8b8b8"/><rect x="10" y="11" width="1" height="1" fill="#808080"/><rect x="0" y="12" width="11" height="1" fill="#808080"/></svg>
<svg class="a" style="left:846px;top:54px;" width="12" height="13" shape-rendering="crispEdges"><rect x="0" y="0" width="8" height="1" fill="#808080"/><rect x="0" y="1" width="1" height="1" fill="#808080"/><rect x="1" y="1" width="6" height="1" fill="#b8b8b8"/><rect x="7" y="1" width="2" height="1" fill="#808080"/><rect x="0" y="2" width="1" height="1" fill="#808080"/><rect x="1" y="2" width="6" height="1" fill="#b8b8b8"/><rect x="7" y="2" width="1" height="1" fill="#808080"/><rect x="8" y="2" width="1" height="1" fill="#b8b8b8"/><rect x="9" y="2" width="1" height="1" fill="#808080"/><rect x="0" y="3" width="1" height="1" fill="#808080"/><rect x="1" y="3" width="6" height="1" fill="#b8b8b8"/><rect x="7" y="3" width="4" height="1" fill="#808080"/><rect x="0" y="4" width="1" height="1" fill="#808080"/><rect x="1" y="4" width="9" height="1" fill="#b8b8b8"/><rect x="10" y="4" width="1" height="1" fill="#808080"/><rect x="0" y="5" width="1" height="1" fill="#808080"/><rect x="1" y="5" width="9" height="1" fill="#b8b8b8"/><rect x="10" y="5" width="1" height="1" fill="#808080"/><rect x="0" y="6" width="1" height="1" fill="#808080"/><rect x="1" y="6" width="9" height="1" fill="#b8b8b8"/><rect x="10" y="6" width="1" height="1" fill="#808080"/><rect x="0" y="7" width="1" height="1" fill="#808080"/><rect x="1" y="7" width="1" height="1" fill="#b8b8b8"/><rect x="2" y="7" width="7" height="1" fill="#808080"/><rect x="9" y="7" width="1" height="1" fill="#b8b8b8"/><rect x="10" y="7" width="1" height="1" fill="#808080"/><rect x="0" y="8" width="1" height="1" fill="#808080"/><rect x="1" y="8" width="9" height="1" fill="#b8b8b8"/><rect x="10" y="8" width="1" height="1" fill="#808080"/><rect x="0" y="9" width="1" height="1" fill="#808080"/><rect x="1" y="9" width="9" height="1" fill="#b8b8b8"/><rect x="10" y="9" width="1" height="1" fill="#808080"/><rect x="0" y="10" width="1" height="1" fill="#808080"/><rect x="1" y="10" width="9" height="1" fill="#b8b8b8"/><rect x="10" y="10" width="1" height="1" fill="#808080"/><rect x="0" y="11" width="1" height="1" fill="#808080"/><rect x="1" y="11" width="9" height="1" fill="#b8b8b8"/><rect x="10" y="11" width="1" height="1" fill="#808080"/><rect x="0" y="12" width="11" height="1" fill="#808080"/></svg>
<svg class="a" style="left:889px;top:54px;" width="14" height="15" shape-rendering="crispEdges"><rect x="6" y="0" width="4" height="1" fill="#000"/><rect x="0" y="1" width="3" height="1" fill="#000"/><rect x="5" y="1" width="1" height="1" fill="#000"/><rect x="6" y="1" width="4" height="1" fill="#00f"/><rect x="10" y="1" width="1" height="1" fill="#000"/><rect x="0" y="2" width="1" height="1" fill="#000"/><rect x="1" y="2" width="1" height="1" fill="#0ff"/><rect x="2" y="2" width="1" height="1" fill="#00f"/><rect x="3" y="2" width="2" height="1" fill="#000"/><rect x="5" y="2" width="5" height="1" fill="#00f"/><rect x="10" y="2" width="1" height="1" fill="#000"/><rect x="0" y="3" width="1" height="1" fill="#000"/><rect x="1" y="3" width="1" height="1" fill="#0ff"/><rect x="2" y="3" width="2" height="1" fill="#00f"/><rect x="4" y="3" width="3" height="1" fill="#fff"/><rect x="7" y="3" width="4" height="1" fill="#00f"/><rect x="11" y="3" width="1" height="1" fill="#000"/><rect x="1" y="4" width="1" height="1" fill="#000"/><rect x="2" y="4" width="1" height="1" fill="#0ff"/><rect x="3" y="4" width="1" height="1" fill="#00f"/><rect x="4" y="4" width="1" height="1" fill="#fff"/><rect x="5" y="4" width="2" height="1" fill="#00f"/><rect x="7" y="4" width="1" height="1" fill="#fff"/><rect x="8" y="4" width="3" height="1" fill="#00f"/><rect x="11" y="4" width="1" height="1" fill="#000"/><rect x="1" y="5" width="1" height="1" fill="#000"/><rect x="2" y="5" width="1" height="1" fill="#0ff"/><rect x="3" y="5" width="4" height="1" fill="#00f"/><rect x="7" y="5" width="1" height="1" fill="#fff"/><rect x="8" y="5" width="3" height="1" fill="#00f"/><rect x="11" y="5" width="1" height="1" fill="#000"/><rect x="1" y="6" width="1" height="1" fill="#000"/><rect x="2" y="6" width="1" height="1" fill="#0ff"/><rect x="3" y="6" width="3" height="1" fill="#00f"/><rect x="6" y="6" width="1" height="1" fill="#fff"/><rect x="7" y="6" width="5" height="1" fill="#00f"/><rect x="12" y="6" width="1" height="1" fill="#000"/><rect x="2" y="7" width="1" height="1" fill="#000"/><rect x="3" y="7" width="1" height="1" fill="#0ff"/><rect x="4" y="7" width="2" height="1" fill="#00f"/><rect x="6" y="7" width="1" height="1" fill="#fff"/><rect x="7" y="7" width="5" height="1" fill="#00f"/><rect x="12" y="7" width="1" height="1" fill="#000"/><rect x="2" y="8" width="1" height="1" fill="#000"/><rect x="3" y="8" width="1" height="1" fill="#0ff"/><rect x="4" y="8" width="8" height="1" fill="#00f"/><rect x="12" y="8" width="1" height="1" fill="#000"/><rect x="2" y="9" width="1" height="1" fill="#000"/><rect x="3" y="9" width="1" height="1" fill="#0ff"/><rect x="4" y="9" width="2" height="1" fill="#00f"/><rect x="6" y="9" width="1" height="1" fill="#fff"/><rect x="7" y="9" width="6" height="1" fill="#00f"/><rect x="13" y="9" width="1" height="1" fill="#000"/><rect x="3" y="10" width="1" height="1" fill="#000"/><rect x="4" y="10" width="1" height="1" fill="#0ff"/><rect x="5" y="10" width="8" height="1" fill="#00f"/><rect x="13" y="10" width="1" height="1" fill="#000"/><rect x="3" y="11" width="1" height="1" fill="#000"/><rect x="4" y="11" width="1" height="1" fill="#0ff"/><rect x="5" y="11" width="7" height="1" fill="#00f"/><rect x="12" y="11" width="1" height="1" fill="#000"/><rect x="3" y="12" width="1" height="1" fill="#000"/><rect x="4" y="12" width="1" height="1" fill="#0ff"/><rect x="5" y="12" width="5" height="1" fill="#00f"/><rect x="10" y="12" width="2" height="1" fill="#000"/><rect x="4" y="13" width="1" height="1" fill="#000"/><rect x="5" y="13" width="2" height="1" fill="#00f"/><rect x="7" y="13" width="3" height="1" fill="#000"/><rect x="4" y="14" width="3" height="1" fill="#000"/></svg>
<div class="a" style="left:5px;top:78px;width:61px;height:1px;background:#fff;"></div>
<div class="a" style="left:4px;top:79px;width:1px;height:1px;background:#fff;"></div>
<div class="a" style="left:3px;top:80px;width:1px;height:22px;background:#fff;"></div>
<div class="a" style="left:66px;top:79px;width:1px;height:1px;background:#000;"></div>
<div class="a" style="left:67px;top:80px;width:1px;height:22px;background:#000;"></div>
<div class="t" style="left:11px;top:84px;font-size:12px;letter-spacing:0.25px;">Cq0180e</div>
<div class="a" style="left:68px;top:100px;width:947px;height:1px;background:#fff;"></div>
<div class="a" style="left:3px;top:101px;width:1px;height:649px;background:#fff;"></div>
<div class="a" style="left:1014px;top:100px;width:1px;height:650px;background:#000;"></div>
<div class="a" style="left:3px;top:749px;width:1012px;height:1px;background:#000;"></div>
<div class="a" style="left:5px;top:102px;width:220px;height:2px;background:#000;"></div>
<div class="a" style="left:5px;top:102px;width:2px;height:641px;background:#000;"></div>
<div class="a" style="left:223px;top:104px;width:2px;height:376px;background:#fff;"></div>
<div class="a raised" style="left:7px;top:104px;width:216px;height:27px;"></div>
<div class="t" style="left:76px;top:112px;font-size:12px;">Add Operation</div>
<div class="a" style="left:7px;top:131px;width:215px;height:2px;background:#fff;"></div>
<div class="a" style="left:7px;top:131px;width:2px;height:333px;background:#fff;"></div>
<div class="a" style="left:9px;top:131px;width:212px;height:333px;overflow:hidden;">
<div class="a row" style="top:2px;height:34px;"></div>
<div class="a lbl" style="top:4px;height:32px;"></div>
<div class="a nf" style="top:6px;"></div>
<div class="t num" style="top:10px;">790</div>
<div class="a df" style="top:6px;height:30px;"></div>
<div class="t m9" style="left:69px;top:22px;">MOVE 9999999999</div>
<div class="t m9" style="left:184px;top:22px;">TO</div>
<div class="t m9" style="left:203px;top:22px;">FH-CQ-MAN-RKEY</div>
<div class="a row" style="top:36px;height:34px;"></div>
<div class="a lbl" style="top:38px;height:32px;"></div>
<div class="a nf" style="top:40px;"></div>
<div class="t num" style="top:44px;">840</div>
<div class="a df" style="top:40px;height:30px;"></div>
<div class="t m9" style="left:69px;top:57px;">SEQUENTIAL READ OF MANDATES FILE</div>
<div class="a row" style="top:70px;height:34px;"></div>
<div class="a lbl" style="top:72px;height:32px;"></div>
<div class="a nf" style="top:74px;"></div>
<div class="t num" style="top:78px;">841</div>
<div class="a df" style="top:74px;height:30px;"></div>
<div class="t m9" style="left:69px;top:91px;">ADD 1</div>
<div class="t m9" style="left:163px;top:91px;">TO</div>
<div class="t m9" style="left:182px;top:91px;">WS-MAN-KEY</div>
<div class="a row" style="top:104px;height:138px;"></div>
<div class="a lbl" style="top:106px;height:136px;"></div>
<div class="a nf" style="top:108px;"></div>
<div class="t num" style="top:112px;">842</div>
<div class="a df" style="top:108px;height:134px;"></div>
<div class="t m9" style="left:70px;top:125px;">DISPLAY 'CQ0180 ERROR'</div>
<div class="t m9" style="left:70px;top:138px;">   UPON RUN-LOG.</div>
<div class="t m9" style="left:70px;top:151px;">DISPLAY 'NEW MANDATE KEY</div>
<div class="t m9" style="left:70px;top:164px;">   UPON RUN-LOG.</div>
<div class="t m9" style="left:70px;top:177px;">DISPLAY 'PREVIOUS MANDATE KEY</div>
<div class="t m9" style="left:70px;top:190px;">   UPON RUN-LOG.</div>
<div class="t m9" style="left:70px;top:203px;">DISPLAY 'CQ0180 ABORTING'</div>
<div class="t m9" style="left:70px;top:216px;">   UPON RUN-LOG.</div>
<div class="t m9" style="left:70px;top:229px;">CALL 'ERERR$'.</div>
<div class="a row" style="top:242px;height:34px;"></div>
<div class="a lbl" style="top:244px;height:32px;"></div>
<div class="a nf" style="top:246px;"></div>
<div class="t num" style="top:250px;">843</div>
<div class="a df" style="top:246px;height:30px;"></div>
<div class="t m9" style="left:69px;top:263px;">MOVE FH-CQ-MAN-RKEY</div>
<div class="t m9" style="left:204px;top:263px;">TO</div>
</div>
<div class="t g" style="left:51px;top:414px;font-size:18px;line-height:20px;">Operations
Editing Area</div>
<div class="a" style="left:8px;top:463px;width:1px;height:17px;background:#fff;"></div>
<div class="a raised" style="left:10px;top:465px;width:15px;height:15px;"></div>
<div class="t" style="left:15px;top:469px;width:0;height:0;border-top:3.5px solid transparent;border-bottom:3.5px solid transparent;border-right:4px solid #000;"></div>
<div class="a raised" style="left:25px;top:465px;width:58px;height:15px;"></div>
<div class="a raised" style="left:207px;top:465px;width:15px;height:15px;"></div>
<div class="t" style="left:212px;top:469px;width:0;height:0;border-top:3.5px solid transparent;border-bottom:3.5px solid transparent;border-left:4px solid #000;"></div>
<div class="a" style="left:6px;top:481px;width:219px;height:2px;background:#fff;"></div>
<div class="a" style="left:5px;top:486px;width:220px;height:1px;background:#000;"></div>
<div class="a" style="left:223px;top:487px;width:2px;height:256px;background:#fff;"></div>
<div class="a raised" style="left:7px;top:487px;width:216px;height:27px;"></div>
<div class="t" style="left:77px;top:495px;font-size:12px;">Add Condition</div>
<div class="a" style="left:7px;top:514px;width:215px;height:2px;background:#fff;"></div>
<div class="a" style="left:7px;top:514px;width:2px;height:213px;background:#fff;"></div>
<div class="a" style="left:9px;top:514px;width:212px;height:213px;overflow:hidden;">
<div class="a crow" style="top:2px;height:34px;"></div>
<div class="a lbl" style="top:4px;height:32px;"></div>
<div class="a nf" style="top:6px;"></div>
<div class="t num" style="top:10px;">1</div>
<div class="a df" style="top:6px;height:30px;"></div>
<div class="t m9" style="left:51px;top:9px;">NEW KEY LESS THAN OLD KEY</div>
<div class="t m9" style="left:51px;top:22px;"> (FH-CQ-MAN-RKEY LT WS-MAN-KEY)</div>
<div class="a crow" style="top:36px;height:34px;"></div>
<div class="a lbl" style="top:38px;height:32px;"></div>
<div class="a nf" style="top:40px;"></div>
<div class="t num" style="top:44px;">2</div>
<div class="a df" style="top:40px;height:30px;"></div>
<div class="t m9" style="left:51px;top:43px;">NEW KEY NOT LESS THAN OLD KEY</div>
<div class="t m9" style="left:51px;top:56px;"> (ELSE)</div>
<div class="a crow" style="top:70px;height:34px;"></div>
<div class="a lbl" style="top:72px;height:32px;"></div>
<div class="a nf" style="top:74px;"></div>
<div class="t num" style="top:78px;">3</div>
<div class="a df" style="top:74px;height:30px;"></div>
<div class="t m9" style="left:51px;top:77px;">END OF MANDATES FILE</div>
<div class="t m9" style="left:51px;top:90px;"> (FH-EOF)</div>
<div class="a crow" style="top:104px;height:34px;"></div>
<div class="a lbl" style="top:106px;height:32px;"></div>
<div class="a nf" style="top:108px;"></div>
<div class="t num" style="top:112px;">4</div>
<div class="a df" style="top:108px;height:30px;"></div>
<div class="t m9" style="left:51px;top:111px;">NOT END OF MANDATES FILE</div>
<div class="t m9" style="left:51px;top:124px;"> (ELSE)</div>
</div>
<div class="t g" style="left:45px;top:667px;font-size:18px;line-height:20px;">Conditions
Editing Area</div>
<div class="a" style="left:8px;top:726px;width:1px;height:17px;background:#fff;"></div>
<div class="a raised" style="left:10px;top:728px;width:15px;height:15px;"></div>
<div class="t" style="left:15px;top:732px;width:0;height:0;border-top:3.5px solid transparent;border-bottom:3.5px solid transparent;border-right:4px solid #000;"></div>
<div class="a raised" style="left:25px;top:728px;width:58px;height:15px;"></div>
<div class="a raised" style="left:207px;top:728px;width:15px;height:15px;"></div>
<div class="t" style="left:212px;top:732px;width:0;height:0;border-top:3.5px solid transparent;border-bottom:3.5px solid transparent;border-left:4px solid #000;"></div>
<div class="a" style="left:5px;top:743px;width:220px;height:4px;background:#fff;"></div>
<div class="a" style="left:228px;top:102px;width:786px;height:2px;background:#000;"></div>
<div class="a" style="left:228px;top:102px;width:2px;height:441px;background:#000;"></div>
<div class="a" style="left:1010px;top:102px;width:4px;height:441px;background:#fff;"></div>
<div class="a" style="left:230px;top:104px;width:764px;height:419px;background:#7bc4c6;"></div>
<div class="a" style="left:232px;top:106px;width:422px;height:325px;border:1px solid #e00000;"></div>
<div class="a" style="left:420px;top:181px;width:1px;height:11px;background:#c8f4f4;"></div>
<div class="a" style="left:285px;top:191px;width:271px;height:1px;background:#c8f4f4;"></div>
<div class="a" style="left:285px;top:191px;width:1px;height:11px;background:#c8f4f4;"></div>
<div class="a" style="left:375px;top:191px;width:1px;height:11px;background:#c8f4f4;"></div>
<div class="a" style="left:555px;top:191px;width:1px;height:11px;background:#c8f4f4;"></div>
<div class="a" style="left:375px;top:258px;width:1px;height:11px;background:#c8f4f4;"></div>
<div class="a" style="left:330px;top:268px;width:91px;height:1px;background:#c8f4f4;"></div>
<div class="a" style="left:330px;top:268px;width:1px;height:11px;background:#c8f4f4;"></div>
<div class="a" style="left:420px;top:268px;width:1px;height:11px;background:#c8f4f4;"></div>
<div class="a" style="left:555px;top:258px;width:1px;height:11px;background:#c8f4f4;"></div>
<div class="a" style="left:510px;top:268px;width:91px;height:1px;background:#c8f4f4;"></div>
<div class="a" style="left:510px;top:268px;width:1px;height:11px;background:#c8f4f4;"></div>
<div class="a" style="left:600px;top:268px;width:1px;height:11px;background:#c8f4f4;"></div>
<div class="a" style="left:330px;top:335px;width:1px;height:21px;background:#c8f4f4;"></div>
<div class="a" style="left:420px;top:335px;width:1px;height:21px;background:#c8f4f4;"></div>
<div class="a" style="left:510px;top:335px;width:1px;height:21px;background:#c8f4f4;"></div>
<div class="a" style="left:600px;top:335px;width:1px;height:21px;background:#c8f4f4;"></div>
<div class="a" style="left:385px;top:124px;width:70px;height:57px;background:#b2f6f4;box-shadow:inset 1px 1px #f0ffff,inset -1px -1px #7a9a9a;"></div>
<div class="a" style="left:250px;top:201px;width:70px;height:57px;background:#bcdcdc;box-shadow:inset 1px 1px #f0ffff,inset -1px -1px #7a9a9a;"></div>
<div class="a" style="left:340px;top:201px;width:70px;height:57px;background:#b2f6f4;box-shadow:inset 1px 1px #f0ffff,inset -1px -1px #7a9a9a;"></div>
<div class="a" style="left:520px;top:201px;width:70px;height:57px;background:#b2f6f4;box-shadow:inset 1px 1px #f0ffff,inset -1px -1px #7a9a9a;"></div>
<div class="a" style="left:295px;top:278px;width:70px;height:57px;background:#94d8d5;box-shadow:inset 1px 1px #f0ffff,inset -1px -1px #7a9a9a;"></div>
<div class="a" style="left:385px;top:278px;width:70px;height:57px;background:#94d8d5;box-shadow:inset 1px 1px #f0ffff,inset -1px -1px #7a9a9a;"></div>
<div class="a" style="left:475px;top:278px;width:70px;height:57px;background:#94d8d5;box-shadow:inset 1px 1px #f0ffff,inset -1px -1px #7a9a9a;"></div>
<div class="a" style="left:565px;top:278px;width:70px;height:57px;background:#94d8d5;box-shadow:inset 1px 1px #f0ffff,inset -1px -1px #7a9a9a;"></div>
<div class="a" style="left:295px;top:355px;width:70px;height:57px;background:#bcdcdc;box-shadow:inset 1px 1px #f0ffff,inset -1px -1px #7a9a9a;"></div>
<div class="a" style="left:385px;top:355px;width:70px;height:57px;background:#bcdcdc;box-shadow:inset 1px 1px #f0ffff,inset -1px -1px #7a9a9a;"></div>
<div class="a" style="left:475px;top:355px;width:70px;height:57px;background:#bcdcdc;box-shadow:inset 1px 1px #f0ffff,inset -1px -1px #7a9a9a;"></div>
<div class="a" style="left:565px;top:355px;width:70px;height:57px;background:#bcdcdc;box-shadow:inset 1px 1px #f0ffff,inset -1px -1px #7a9a9a;"></div>
<div class="t m9" style="left:394px;top:154px;">CQ0180E</div>
<div class="t m9" style="left:263px;top:232px;">840</div>
<div class="t m9" style="left:345px;top:232px;">CHECK-KEY</div>
<div class="t m9" style="left:525px;top:232px;">CHECK-EOF</div>
<div class="t m9" style="left:314px;top:284px;">(1)</div>
<svg class="a" style="left:358px;top:283px;" width="4" height="5" shape-rendering="crispEdges"><rect x="1" y="0" width="2" height="1" fill="#00f"/><rect x="0" y="1" width="1" height="1" fill="#00f"/><rect x="3" y="1" width="1" height="1" fill="#00f"/><rect x="0" y="2" width="1" height="1" fill="#00f"/><rect x="3" y="2" width="1" height="1" fill="#00f"/><rect x="0" y="3" width="1" height="1" fill="#00f"/><rect x="3" y="3" width="1" height="1" fill="#00f"/><rect x="1" y="4" width="2" height="1" fill="#00f"/></svg>
<div class="t m9" style="left:404px;top:284px;">(2)</div>
<svg class="a" style="left:448px;top:283px;" width="4" height="5" shape-rendering="crispEdges"><rect x="1" y="0" width="2" height="1" fill="#00f"/><rect x="0" y="1" width="1" height="1" fill="#00f"/><rect x="3" y="1" width="1" height="1" fill="#00f"/><rect x="0" y="2" width="1" height="1" fill="#00f"/><rect x="3" y="2" width="1" height="1" fill="#00f"/><rect x="0" y="3" width="1" height="1" fill="#00f"/><rect x="3" y="3" width="1" height="1" fill="#00f"/><rect x="1" y="4" width="2" height="1" fill="#00f"/></svg>
<div class="t m9" style="left:494px;top:284px;">(3)</div>
<svg class="a" style="left:538px;top:283px;" width="4" height="5" shape-rendering="crispEdges"><rect x="1" y="0" width="2" height="1" fill="#00f"/><rect x="0" y="1" width="1" height="1" fill="#00f"/><rect x="3" y="1" width="1" height="1" fill="#00f"/><rect x="0" y="2" width="1" height="1" fill="#00f"/><rect x="3" y="2" width="1" height="1" fill="#00f"/><rect x="0" y="3" width="1" height="1" fill="#00f"/><rect x="3" y="3" width="1" height="1" fill="#00f"/><rect x="1" y="4" width="2" height="1" fill="#00f"/></svg>
<div class="t m9" style="left:584px;top:284px;">(4)</div>
<svg class="a" style="left:628px;top:283px;" width="4" height="5" shape-rendering="crispEdges"><rect x="1" y="0" width="2" height="1" fill="#00f"/><rect x="0" y="1" width="1" height="1" fill="#00f"/><rect x="3" y="1" width="1" height="1" fill="#00f"/><rect x="0" y="2" width="1" height="1" fill="#00f"/><rect x="3" y="2" width="1" height="1" fill="#00f"/><rect x="0" y="3" width="1" height="1" fill="#00f"/><rect x="3" y="3" width="1" height="1" fill="#00f"/><rect x="1" y="4" width="2" height="1" fill="#00f"/></svg>
<div class="t m9" style="left:300px;top:309px;">KEY-ERROR</div>
<div class="t m9" style="left:393px;top:309px;">KEY-OK</div>
<div class="t m9" style="left:489px;top:309px;">EOF</div>
<div class="t m9" style="left:572px;top:309px;">NOT-EOF</div>
<div class="t m9" style="left:309px;top:386px;">842</div>
<div class="t m9" style="left:399px;top:386px;">843</div>
<div class="t m9" style="left:489px;top:386px;">790</div>
<div class="t m9" style="left:579px;top:386px;">841</div>
<div class="t g" style="left:660px;top:236px;font-size:32px;line-height:37px;">Tree
Editing
Area</div>
<div class="a" style="left:994px;top:104px;width:16px;height:419px;background:#c6c6c6;"></div>
<div class="a raised" style="left:994px;top:104px;width:16px;height:16px;"></div>
<div class="t" style="left:998px;top:110px;width:0;height:0;border-left:4px solid transparent;border-right:4px solid transparent;border-bottom:4px solid #000;"></div>
<div class="a raised" style="left:995px;top:508px;width:15px;height:15px;"></div>
<div class="t" style="left:999px;top:513px;width:0;height:0;border-left:3.5px solid transparent;border-right:3.5px solid transparent;border-top:4px solid #000;"></div>
<div class="a" style="left:230px;top:523px;width:764px;height:16px;background:#c6c6c6;"></div>
<div class="a raised" style="left:230px;top:523px;width:16px;height:16px;"></div>
<div class="t" style="left:236px;top:527px;width:0;height:0;border-top:4px solid transparent;border-bottom:4px solid transparent;border-right:4px solid #000;"></div>
<div class="a raised" style="left:994px;top:523px;width:16px;height:16px;"></div>
<div class="t" style="left:1000px;top:527px;width:0;height:0;border-top:4px solid transparent;border-bottom:4px solid transparent;border-left:4px solid #000;"></div>
<div class="a" style="left:230px;top:539px;width:784px;height:2px;background:#fff;"></div>
<div class="a" style="left:230px;top:539px;width:784px;height:1px;background:#fff;"></div>
<div class="a" style="left:230px;top:540px;width:784px;height:1px;background:#dfdfdf;"></div>
<div class="a" style="left:228px;top:543px;width:783px;height:2px;background:#000;"></div>
<div class="a" style="left:228px;top:543px;width:3px;height:204px;background:#000;"></div>
<div class="a" style="left:231px;top:545px;width:264px;height:198px;background:#8a8a8a;"></div>
<div class="a" style="left:232px;top:546px;width:263px;height:197px;background:#fff;"></div>
<div class="a" style="left:233px;top:547px;width:261px;height:195px;background:#4491a2;"></div>
<div class="a" style="left:231px;top:742px;width:264px;height:1px;background:#8a8a8a;"></div>
<div class="a" style="left:494px;top:545px;width:1px;height:198px;background:#8a8a8a;"></div>
<div class="a" style="left:231px;top:743px;width:781px;height:4px;background:#fff;"></div>
<div class="a" style="left:495px;top:545px;width:2px;height:202px;background:#fff;"></div>
<div class="a" style="left:497px;top:545px;width:3px;height:200px;background:#c8c8c8;"></div>
<div class="a" style="left:500px;top:545px;width:1px;height:201px;background:#000;"></div>
<div class="a" style="left:501px;top:545px;width:511px;height:2px;background:#fff;"></div>
<div class="a" style="left:501px;top:545px;width:2px;height:198px;background:#fff;"></div>
<div class="a" style="left:503px;top:547px;width:504px;height:195px;background:#5aaac6;"></div>
<div class="a" style="left:1007px;top:547px;width:1px;height:196px;background:#8a8a8a;"></div>
<div class="a" style="left:503px;top:742px;width:505px;height:1px;background:#8a8a8a;"></div>
<div class="a" style="left:1008px;top:545px;width:4px;height:202px;background:#fff;"></div>
<div class="a" style="left:1012px;top:541px;width:2px;height:208px;background:#c6c6c6;"></div>
<div class="a" style="left:228px;top:747px;width:786px;height:2px;background:#c6c6c6;"></div>
<div class="t g" style="left:301px;top:596px;font-size:32px;line-height:37px;">Conditions
Passover
Area</div>
<div class="t m9" style="left:503px;top:549px;">--- 843 ---</div>
<div class="t m9" style="left:521px;top:561px;">MOVE FH-CQ-MAN-RKEY</div>
<div class="t m9" style="left:656px;top:561px;">TO</div>
<div class="t m9" style="left:674px;top:561px;">WS-MAN-KEY.</div>
<div class="t g" style="left:535px;top:592px;font-size:32px;line-height:37px;">Operations
Passover
Area</div>
</body></html>
